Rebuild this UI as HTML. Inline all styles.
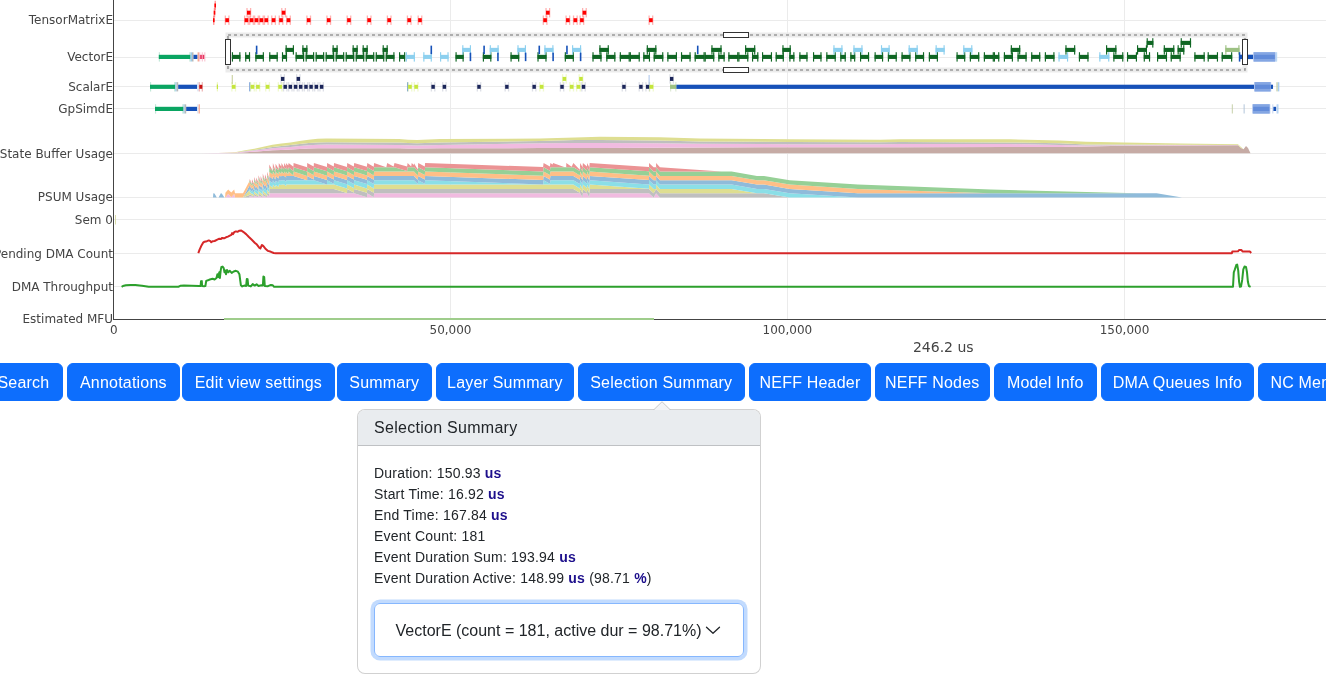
<!DOCTYPE html>
<html lang="en">
<head>
<meta charset="utf-8">
<title>Profile</title>
<style>
html,body{margin:0;padding:0;background:#fff;}
svg,.b,.pop{will-change:transform;}
body{width:1326px;height:681px;overflow:hidden;position:relative;font-family:"Liberation Sans",sans-serif;color:#212529;}
.b{position:absolute;top:363px;height:38px;box-sizing:border-box;background:#0d6efd;border:1px solid #0d6efd;border-radius:6px;color:#fff;font-family:"Liberation Sans",sans-serif;font-size:16px;line-height:24px;padding:7px 0 5px 0;letter-spacing:.2px;text-align:center;white-space:nowrap;margin:0;}
.pop{position:absolute;left:357px;top:409px;width:404px;height:265px;box-sizing:border-box;border:1px solid rgba(0,0,0,.18);border-radius:8px;background:#fff;}
.ph{height:36px;box-sizing:border-box;background:#e9ecef;border-bottom:1px solid rgba(0,0,0,.18);border-radius:7px 7px 0 0;padding:8px 16px;font-size:16px;line-height:19px;letter-spacing:.28px;}
.pb{padding:17px 16px 0 16px;font-size:14px;line-height:21px;letter-spacing:.2px;white-space:nowrap;}
.pb b{color:#1d0f8c;font-weight:700;}
.sel{position:absolute;left:15.5px;top:193px;width:370px;height:53.5px;box-sizing:border-box;border:1px solid #86b7fe;border-radius:6px;box-shadow:0 0 0 3.5px rgba(13,110,253,.25);font-size:16px;line-height:51px;padding-top:1.2px;text-align:center;white-space:nowrap;}
.arrow{position:absolute;left:653px;top:401px;}
</style>
</head>
<body>
<svg width="1326" height="360" viewBox="0 0 1326 360" style="position:absolute;left:0;top:0">
<g shape-rendering="crispEdges">
<line x1="114" x2="1326" y1="20.2" y2="20.2" stroke="#ebebeb" stroke-width="1"/>
<line x1="114" x2="1326" y1="57.2" y2="57.2" stroke="#ebebeb" stroke-width="1"/>
<line x1="114" x2="1326" y1="86.8" y2="86.8" stroke="#ebebeb" stroke-width="1"/>
<line x1="114" x2="1326" y1="108.9" y2="108.9" stroke="#ebebeb" stroke-width="1"/>
<line x1="114" x2="1326" y1="153.4" y2="153.4" stroke="#ebebeb" stroke-width="1"/>
<line x1="114" x2="1326" y1="197.8" y2="197.8" stroke="#ebebeb" stroke-width="1"/>
<line x1="114" x2="1326" y1="219.3" y2="219.3" stroke="#ebebeb" stroke-width="1"/>
<line x1="114" x2="1326" y1="253.4" y2="253.4" stroke="#ebebeb" stroke-width="1"/>
<line x1="114" x2="1326" y1="286.8" y2="286.8" stroke="#ebebeb" stroke-width="1"/>
<line x1="450.5" x2="450.5" y1="0" y2="319" stroke="#ebebeb" stroke-width="1"/>
<line x1="787.4" x2="787.4" y1="0" y2="319" stroke="#ebebeb" stroke-width="1"/>
<line x1="1124.5" x2="1124.5" y1="0" y2="319" stroke="#ebebeb" stroke-width="1"/>
</g>
<g>
<polygon points="200.0,153.3 218.1,153.2 236.2,152.9 245.2,152.2 254.3,151.7 263.3,151.0 272.4,150.3 281.4,149.9 290.5,149.5 299.5,149.0 308.6,148.5 317.6,148.2 326.7,148.2 362.9,148.2 399.1,148.3 408.1,148.5 417.2,148.6 440.0,148.3 540.0,148.1 575.0,147.9 600.0,147.9 660.0,147.7 700.0,147.5 790.0,147.3 880.0,147.2 900.0,147.2 1010.0,147.0 1060.0,147.0 1086.0,146.5 1124.0,145.8 1180.0,145.4 1238.0,145.2 1241.0,147.9 1243.5,149.2 1246.0,146.0 1248.0,148.0 1250.5,153.3 1250.5,153.3 1248.0,153.3 1246.0,153.3 1243.5,153.3 1241.0,153.3 1238.0,153.3 1180.0,153.3 1124.0,153.3 1086.0,153.3 1060.0,153.3 1010.0,153.3 900.0,153.3 880.0,153.3 790.0,153.3 700.0,153.3 660.0,153.3 600.0,153.3 575.0,153.3 540.0,153.3 440.0,153.3 417.2,153.3 408.1,153.3 399.1,153.3 362.9,153.3 326.7,153.3 317.6,153.3 308.6,153.3 299.5,153.3 290.5,153.3 281.4,153.3 272.4,153.3 263.3,153.3 254.3,153.3 245.2,153.3 236.2,153.3 218.1,153.3 200.0,153.3" fill="#c6aba5"/>
<polygon points="200.0,153.3 218.1,153.1 236.2,152.6 245.2,151.5 254.3,150.6 263.3,149.5 272.4,148.3 281.4,147.5 290.5,146.9 299.5,146.0 308.6,145.3 317.6,144.7 326.7,144.6 362.9,144.7 399.1,144.9 408.1,145.3 417.2,145.4 440.0,144.9 540.0,143.3 575.0,143.0 600.0,143.0 660.0,143.2 700.0,143.8 790.0,144.2 880.0,144.2 900.0,144.0 1010.0,144.0 1060.0,145.0 1086.0,145.4 1124.0,145.2 1180.0,145.0 1238.0,145.0 1241.0,147.9 1243.5,149.2 1246.0,146.0 1248.0,148.0 1250.5,153.3 1250.5,153.3 1248.0,148.0 1246.0,146.0 1243.5,149.2 1241.0,147.9 1238.0,145.2 1180.0,145.4 1124.0,145.8 1086.0,146.5 1060.0,147.0 1010.0,147.0 900.0,147.2 880.0,147.2 790.0,147.3 700.0,147.5 660.0,147.7 600.0,147.9 575.0,147.9 540.0,148.1 440.0,148.3 417.2,148.6 408.1,148.5 399.1,148.3 362.9,148.2 326.7,148.2 317.6,148.2 308.6,148.5 299.5,149.0 290.5,149.5 281.4,149.9 272.4,150.3 263.3,151.0 254.3,151.7 245.2,152.2 236.2,152.9 218.1,153.2 200.0,153.3" fill="#f1bbe0"/>
<polygon points="200.0,153.3 218.1,153.1 236.2,152.4 245.2,151.1 254.3,149.9 263.3,148.4 272.4,146.9 281.4,146.0 290.5,145.1 299.5,144.1 308.6,143.1 317.6,142.4 326.7,142.3 362.9,142.4 399.1,142.6 408.1,143.1 417.2,143.2 440.0,142.6 540.0,141.0 575.0,140.0 600.0,140.0 660.0,140.5 700.0,141.5 790.0,142.0 880.0,142.3 900.0,142.0 1010.0,142.4 1060.0,143.3 1086.0,144.4 1124.0,144.6 1180.0,144.7 1238.0,144.9 1241.0,147.9 1243.5,149.2 1246.0,146.0 1248.0,148.0 1250.5,153.3 1250.5,153.3 1248.0,148.0 1246.0,146.0 1243.5,149.2 1241.0,147.9 1238.0,145.0 1180.0,145.0 1124.0,145.2 1086.0,145.4 1060.0,145.0 1010.0,144.0 900.0,144.0 880.0,144.2 790.0,144.2 700.0,143.8 660.0,143.2 600.0,143.0 575.0,143.0 540.0,143.3 440.0,144.9 417.2,145.4 408.1,145.3 399.1,144.9 362.9,144.7 326.7,144.6 317.6,144.7 308.6,145.3 299.5,146.0 290.5,146.9 281.4,147.5 272.4,148.3 263.3,149.5 254.3,150.6 245.2,151.5 236.2,152.6 218.1,153.1 200.0,153.3" fill="#bfbfbf"/>
<polygon points="200.0,153.3 218.1,153.0 236.2,152.1 245.2,150.3 254.3,148.8 263.3,146.8 272.4,144.8 281.4,143.5 290.5,142.4 299.5,141.0 308.6,139.7 317.6,138.8 326.7,138.6 362.9,138.8 399.1,139.0 408.1,139.7 417.2,139.9 440.0,139.0 540.0,138.6 575.0,137.5 600.0,136.8 660.0,137.2 700.0,138.5 790.0,139.3 880.0,139.8 900.0,139.2 1010.0,139.3 1060.0,140.6 1086.0,141.8 1124.0,142.6 1180.0,143.4 1238.0,144.2 1241.0,147.0 1243.5,149.2 1246.0,146.0 1248.0,148.0 1250.5,153.3 1250.5,153.3 1248.0,148.0 1246.0,146.0 1243.5,149.2 1241.0,147.9 1238.0,144.9 1180.0,144.7 1124.0,144.6 1086.0,144.4 1060.0,143.3 1010.0,142.4 900.0,142.0 880.0,142.3 790.0,142.0 700.0,141.5 660.0,140.5 600.0,140.0 575.0,140.0 540.0,141.0 440.0,142.6 417.2,143.2 408.1,143.1 399.1,142.6 362.9,142.4 326.7,142.3 317.6,142.4 308.6,143.1 299.5,144.1 290.5,145.1 281.4,146.0 272.4,146.9 263.3,148.4 254.3,149.9 245.2,151.1 236.2,152.4 218.1,153.1 200.0,153.3" fill="#dede91"/>
<polygon points="213.0,197.6 213.3,197.6 214.5,197.6 216.8,197.6 218.6,197.6 220.8,197.6 221.8,197.6 224.2,197.6 224.3,197.6 225.1,197.6 225.4,197.6 228.2,193.7 231.3,197.2 234.2,193.9 235.0,197.6 243.0,197.6 249.3,197.6 249.8,195.7 251.8,196.7 252.0,196.6 254.0,197.3 254.1,195.5 256.1,196.6 256.3,196.5 258.3,197.2 258.5,195.4 260.5,196.5 260.7,196.4 262.6,197.2 262.8,195.2 264.8,196.4 265.0,196.4 267.0,197.2 267.2,195.0 269.2,196.3 269.3,193.3 272.7,193.3 272.9,193.3 275.4,193.3 275.6,193.3 278.6,193.3 278.8,193.3 281.3,193.3 281.5,193.3 284.0,193.3 284.2,193.3 286.3,193.3 285.9,193.3 288.2,193.3 288.6,193.3 293.4,193.3 293.6,193.3 307.1,193.3 307.2,193.3 313.7,193.3 313.9,193.3 327.0,193.3 327.1,193.3 333.8,193.3 334.0,193.3 347.0,193.3 347.2,193.3 353.8,193.3 354.2,193.3 366.9,197.2 367.3,193.3 373.7,197.2 374.1,193.3 386.3,193.3 387.2,193.3 393.6,193.3 394.5,193.3 407.1,193.3 407.6,193.3 411.2,193.3 411.7,193.3 413.9,193.3 414.0,193.3 417.8,193.3 418.2,193.3 424.8,193.3 425.1,193.3 543.1,193.3 543.6,193.3 549.9,193.3 550.4,193.3 552.6,193.3 553.1,193.3 564.8,193.3 564.8,193.3 566.2,193.3 566.3,193.3 571.6,193.3 573.4,193.3 579.8,193.3 580.2,193.3 582.5,197.6 582.9,193.3 587.0,193.3 587.1,193.3 589.3,197.6 589.7,193.3 649.0,193.3 649.0,193.3 653.6,197.6 653.6,197.6 656.1,193.3 656.1,193.3 659.9,197.6 659.9,197.6 721.4,197.6 721.4,197.6 731.6,197.6 731.6,197.6 757.0,197.6 757.0,197.6 764.0,197.6 764.0,197.6 789.7,197.6 789.7,197.6 858.0,197.6 858.0,197.6 991.0,197.6 991.0,197.6 1137.0,197.6 1137.0,197.6 1156.6,197.6 1156.6,197.6 1182.0,197.6 1182.0,197.6 1156.6,197.6 1156.6,197.6 1137.0,197.6 1137.0,197.6 991.0,197.6 991.0,197.6 858.0,197.6 858.0,197.6 789.7,197.6 789.7,197.6 764.0,197.6 764.0,197.6 757.0,197.6 757.0,197.6 731.6,197.6 731.6,197.6 721.4,197.6 721.4,197.6 659.9,197.6 659.9,197.6 656.1,197.6 656.1,197.6 653.6,197.6 653.6,197.6 649.0,197.6 649.0,197.6 589.7,197.6 589.3,197.6 587.1,197.6 587.0,197.6 582.9,197.6 582.5,197.6 580.2,197.6 579.8,197.6 573.4,197.6 571.6,197.6 566.3,197.6 566.2,197.6 564.8,197.6 564.8,197.6 553.1,197.6 552.6,197.6 550.4,197.6 549.9,197.6 543.6,197.6 543.1,197.6 425.1,197.6 424.8,197.6 418.2,197.6 417.8,197.6 414.0,197.6 413.9,197.6 411.7,197.6 411.2,197.6 407.6,197.6 407.1,197.6 394.5,197.6 393.6,197.6 387.2,197.6 386.3,197.6 374.1,197.6 373.7,197.6 367.3,197.6 366.9,197.6 354.2,197.6 353.8,197.6 347.2,197.6 347.0,197.6 334.0,197.6 333.8,197.6 327.1,197.6 327.0,197.6 313.9,197.6 313.7,197.6 307.2,197.6 307.1,197.6 293.6,197.6 293.4,197.6 288.6,197.6 288.2,197.6 285.9,197.6 286.3,197.6 284.2,197.6 284.0,197.6 281.5,197.6 281.3,197.6 278.8,197.6 278.6,197.6 275.6,197.6 275.4,197.6 272.9,197.6 272.7,197.6 269.3,197.6 269.2,197.6 267.2,197.6 267.0,197.6 265.0,197.6 264.8,197.6 262.8,197.6 262.6,197.6 260.7,197.6 260.5,197.6 258.5,197.6 258.3,197.6 256.3,197.6 256.1,197.6 254.1,197.6 254.0,197.6 252.0,197.6 251.8,197.6 249.8,197.6 249.3,197.6 243.0,197.6 235.0,197.6 234.2,197.6 231.3,197.6 228.2,197.6 225.4,197.6 225.1,197.6 224.3,197.6 224.2,197.6 221.8,197.6 220.8,197.6 218.6,197.6 216.8,197.6 214.5,197.6 213.3,197.6 213.0,197.6" fill="#f1bbe0"/>
<polygon points="213.0,197.6 213.3,197.6 214.5,197.6 216.8,197.6 218.6,197.6 220.8,197.6 221.8,197.6 224.2,197.6 224.3,197.6 225.1,197.6 225.4,197.6 228.2,193.7 231.3,197.2 234.2,193.9 235.0,197.6 243.0,197.6 249.3,195.0 249.8,193.9 251.8,195.4 252.0,195.3 254.0,196.6 254.1,193.5 256.1,195.2 256.3,195.1 258.3,196.5 258.5,193.1 260.5,195.0 260.7,194.9 262.6,196.4 262.8,192.8 264.8,194.8 265.0,194.7 267.0,196.4 267.2,192.4 269.2,194.6 269.3,188.9 272.7,188.9 272.9,188.9 275.4,188.9 275.6,188.9 278.6,188.9 278.8,188.9 281.3,188.9 281.5,188.9 284.0,188.9 284.2,188.9 286.3,188.9 285.9,188.9 288.2,188.9 288.6,188.9 293.4,188.9 293.6,188.9 307.1,188.9 307.2,188.9 313.7,188.9 313.9,188.9 327.0,188.9 327.1,188.9 333.8,188.9 334.0,188.9 347.0,192.9 347.2,188.9 353.8,192.6 354.2,188.9 366.9,192.8 367.3,188.9 373.7,192.8 374.1,188.9 386.3,188.9 387.2,188.9 393.6,188.9 394.5,188.9 407.1,188.9 407.6,188.9 411.2,188.9 411.7,188.9 413.9,188.9 414.0,188.9 417.8,188.9 418.2,188.9 424.8,188.9 425.1,188.9 543.1,188.9 543.6,188.9 549.9,188.9 550.4,188.9 552.6,188.9 553.1,188.9 564.8,188.9 564.8,188.9 566.2,188.9 566.3,188.9 571.6,188.9 573.4,188.9 579.8,192.8 580.2,188.9 582.5,193.3 582.9,188.9 587.0,192.4 587.1,188.9 589.3,193.3 589.7,188.9 649.0,188.9 649.0,188.9 653.6,193.3 653.6,193.3 656.1,188.9 656.1,188.9 659.9,193.3 659.9,193.3 721.4,193.3 721.4,193.3 731.6,193.3 731.6,193.3 757.0,193.3 757.0,193.3 764.0,193.3 764.0,193.3 789.7,197.6 789.7,197.6 858.0,197.6 858.0,197.6 991.0,197.6 991.0,197.6 1137.0,197.6 1137.0,197.6 1156.6,197.6 1156.6,197.6 1182.0,197.6 1182.0,197.6 1156.6,197.6 1156.6,197.6 1137.0,197.6 1137.0,197.6 991.0,197.6 991.0,197.6 858.0,197.6 858.0,197.6 789.7,197.6 789.7,197.6 764.0,197.6 764.0,197.6 757.0,197.6 757.0,197.6 731.6,197.6 731.6,197.6 721.4,197.6 721.4,197.6 659.9,197.6 659.9,197.6 656.1,193.3 656.1,193.3 653.6,197.6 653.6,197.6 649.0,193.3 649.0,193.3 589.7,193.3 589.3,197.6 587.1,193.3 587.0,193.3 582.9,193.3 582.5,197.6 580.2,193.3 579.8,193.3 573.4,193.3 571.6,193.3 566.3,193.3 566.2,193.3 564.8,193.3 564.8,193.3 553.1,193.3 552.6,193.3 550.4,193.3 549.9,193.3 543.6,193.3 543.1,193.3 425.1,193.3 424.8,193.3 418.2,193.3 417.8,193.3 414.0,193.3 413.9,193.3 411.7,193.3 411.2,193.3 407.6,193.3 407.1,193.3 394.5,193.3 393.6,193.3 387.2,193.3 386.3,193.3 374.1,193.3 373.7,197.2 367.3,193.3 366.9,197.2 354.2,193.3 353.8,193.3 347.2,193.3 347.0,193.3 334.0,193.3 333.8,193.3 327.1,193.3 327.0,193.3 313.9,193.3 313.7,193.3 307.2,193.3 307.1,193.3 293.6,193.3 293.4,193.3 288.6,193.3 288.2,193.3 285.9,193.3 286.3,193.3 284.2,193.3 284.0,193.3 281.5,193.3 281.3,193.3 278.8,193.3 278.6,193.3 275.6,193.3 275.4,193.3 272.9,193.3 272.7,193.3 269.3,193.3 269.2,196.3 267.2,195.0 267.0,197.2 265.0,196.4 264.8,196.4 262.8,195.2 262.6,197.2 260.7,196.4 260.5,196.5 258.5,195.4 258.3,197.2 256.3,196.5 256.1,196.6 254.1,195.5 254.0,197.3 252.0,196.6 251.8,196.7 249.8,195.7 249.3,197.6 243.0,197.6 235.0,197.6 234.2,193.9 231.3,197.2 228.2,193.7 225.4,197.6 225.1,197.6 224.3,197.6 224.2,197.6 221.8,197.6 220.8,197.6 218.6,197.6 216.8,197.6 214.5,197.6 213.3,197.6 213.0,197.6" fill="#bfbfbf"/>
<polygon points="213.0,197.6 213.3,197.6 214.5,197.6 216.8,197.6 218.6,197.6 220.8,197.6 221.8,197.6 224.2,197.6 224.3,197.6 225.1,197.6 225.4,197.6 228.2,193.7 231.3,197.2 234.2,193.9 235.0,197.6 243.0,197.6 249.3,190.2 249.8,191.7 251.8,193.9 252.0,193.3 254.0,195.3 254.1,191.1 256.1,193.5 256.3,193.0 258.3,195.1 258.5,190.5 260.5,193.1 260.7,192.6 262.6,194.9 262.8,190.0 264.8,192.8 265.0,192.2 267.0,194.7 267.2,189.4 269.2,192.4 269.3,185.0 272.7,187.6 272.9,184.6 275.4,187.2 275.6,185.0 278.6,186.8 278.8,184.6 281.3,185.0 281.5,184.6 284.0,184.6 284.2,184.6 286.3,186.3 285.9,184.6 288.2,184.6 288.6,184.6 293.4,184.6 293.6,184.6 307.1,184.6 307.2,184.6 313.7,184.6 313.9,184.6 327.0,184.6 327.1,184.6 333.8,184.6 334.0,184.6 347.0,188.6 347.2,184.6 353.8,188.3 354.2,184.6 366.9,188.5 367.3,184.6 373.7,188.5 374.1,184.6 386.3,184.6 387.2,184.6 393.6,184.6 394.5,184.6 407.1,184.6 407.6,184.6 411.2,184.6 411.7,184.6 413.9,184.6 414.0,184.6 417.8,184.6 418.2,184.6 424.8,184.6 425.1,184.6 543.1,184.6 543.6,184.6 549.9,184.6 550.4,184.6 552.6,184.6 553.1,184.6 564.8,184.6 564.8,184.6 566.2,184.6 566.3,184.6 571.6,184.6 573.4,184.6 579.8,188.5 580.2,184.6 582.5,188.9 582.9,184.6 587.0,188.1 587.1,184.6 589.3,188.9 589.7,184.6 649.0,188.7 649.0,184.6 653.6,188.9 653.6,188.9 656.1,188.9 656.1,184.6 659.9,188.9 659.9,188.9 721.4,188.9 721.4,188.9 731.6,188.9 731.6,188.9 757.0,193.3 757.0,193.3 764.0,193.3 764.0,193.3 789.7,197.6 789.7,197.6 858.0,197.6 858.0,197.6 991.0,197.6 991.0,197.6 1137.0,197.6 1137.0,197.6 1156.6,197.6 1156.6,197.6 1182.0,197.6 1182.0,197.6 1156.6,197.6 1156.6,197.6 1137.0,197.6 1137.0,197.6 991.0,197.6 991.0,197.6 858.0,197.6 858.0,197.6 789.7,197.6 789.7,197.6 764.0,193.3 764.0,193.3 757.0,193.3 757.0,193.3 731.6,193.3 731.6,193.3 721.4,193.3 721.4,193.3 659.9,193.3 659.9,193.3 656.1,188.9 656.1,188.9 653.6,193.3 653.6,193.3 649.0,188.9 649.0,188.9 589.7,188.9 589.3,193.3 587.1,188.9 587.0,192.4 582.9,188.9 582.5,193.3 580.2,188.9 579.8,192.8 573.4,188.9 571.6,188.9 566.3,188.9 566.2,188.9 564.8,188.9 564.8,188.9 553.1,188.9 552.6,188.9 550.4,188.9 549.9,188.9 543.6,188.9 543.1,188.9 425.1,188.9 424.8,188.9 418.2,188.9 417.8,188.9 414.0,188.9 413.9,188.9 411.7,188.9 411.2,188.9 407.6,188.9 407.1,188.9 394.5,188.9 393.6,188.9 387.2,188.9 386.3,188.9 374.1,188.9 373.7,192.8 367.3,188.9 366.9,192.8 354.2,188.9 353.8,192.6 347.2,188.9 347.0,192.9 334.0,188.9 333.8,188.9 327.1,188.9 327.0,188.9 313.9,188.9 313.7,188.9 307.2,188.9 307.1,188.9 293.6,188.9 293.4,188.9 288.6,188.9 288.2,188.9 285.9,188.9 286.3,188.9 284.2,188.9 284.0,188.9 281.5,188.9 281.3,188.9 278.8,188.9 278.6,188.9 275.6,188.9 275.4,188.9 272.9,188.9 272.7,188.9 269.3,188.9 269.2,194.6 267.2,192.4 267.0,196.4 265.0,194.7 264.8,194.8 262.8,192.8 262.6,196.4 260.7,194.9 260.5,195.0 258.5,193.1 258.3,196.5 256.3,195.1 256.1,195.2 254.1,193.5 254.0,196.6 252.0,195.3 251.8,195.4 249.8,193.9 249.3,195.0 243.0,197.6 235.0,197.6 234.2,193.9 231.3,197.2 228.2,193.7 225.4,197.6 225.1,197.6 224.3,197.6 224.2,197.6 221.8,197.6 220.8,197.6 218.6,197.6 216.8,197.6 214.5,197.6 213.3,197.6 213.0,197.6" fill="#dede91"/>
<polygon points="213.0,197.6 213.3,197.6 214.5,197.6 216.8,197.6 218.6,197.6 220.8,197.6 221.8,197.6 224.2,197.6 224.3,197.6 225.1,197.6 225.4,197.6 228.2,193.7 231.3,197.2 234.2,193.9 235.0,197.6 243.0,197.6 249.3,190.2 249.8,189.2 251.8,191.7 252.0,190.1 254.0,192.7 254.1,188.4 256.1,191.1 256.3,189.4 258.3,192.2 258.5,187.6 260.5,190.5 260.7,188.7 262.6,191.8 262.8,186.8 264.8,190.0 265.0,188.0 267.0,191.4 267.2,185.9 269.2,189.4 269.3,180.7 272.7,183.3 272.9,180.2 275.4,183.7 275.6,180.7 278.6,182.4 278.8,180.2 281.3,180.7 281.5,180.2 284.0,180.2 284.2,180.2 286.3,182.0 285.9,180.2 288.2,180.2 288.6,180.2 293.4,180.2 293.6,180.2 307.1,180.2 307.2,180.2 313.7,180.2 313.9,180.2 327.0,184.4 327.1,180.2 333.8,183.8 334.0,180.2 347.0,184.2 347.2,180.2 353.8,183.9 354.2,180.2 366.9,184.1 367.3,180.2 373.7,184.1 374.1,180.2 386.3,180.2 387.2,180.2 393.6,180.2 394.5,180.2 407.1,180.2 407.6,180.2 411.2,180.2 411.7,180.2 413.9,180.2 414.0,180.2 417.8,184.1 418.2,180.2 424.8,183.7 425.1,180.2 543.1,184.4 543.6,180.2 549.9,183.7 550.4,180.2 552.6,180.2 553.1,180.2 564.8,180.2 564.8,180.2 566.2,180.2 566.3,180.2 571.6,180.2 573.4,180.2 579.8,184.1 580.2,180.2 582.5,184.6 582.9,180.2 587.0,183.7 587.1,180.2 589.3,184.6 589.7,180.2 649.0,184.4 649.0,180.2 653.6,184.6 653.6,184.6 656.1,184.6 656.1,180.2 659.9,184.6 659.9,184.6 721.4,184.6 721.4,184.6 731.6,184.6 731.6,184.6 757.0,188.9 757.0,188.9 764.0,188.9 764.0,188.9 789.7,193.3 789.7,193.3 858.0,197.6 858.0,197.6 991.0,197.6 991.0,197.6 1137.0,197.6 1137.0,197.6 1156.6,197.6 1156.6,197.6 1182.0,197.6 1182.0,197.6 1156.6,197.6 1156.6,197.6 1137.0,197.6 1137.0,197.6 991.0,197.6 991.0,197.6 858.0,197.6 858.0,197.6 789.7,197.6 789.7,197.6 764.0,193.3 764.0,193.3 757.0,193.3 757.0,193.3 731.6,188.9 731.6,188.9 721.4,188.9 721.4,188.9 659.9,188.9 659.9,188.9 656.1,184.6 656.1,188.9 653.6,188.9 653.6,188.9 649.0,184.6 649.0,188.7 589.7,184.6 589.3,188.9 587.1,184.6 587.0,188.1 582.9,184.6 582.5,188.9 580.2,184.6 579.8,188.5 573.4,184.6 571.6,184.6 566.3,184.6 566.2,184.6 564.8,184.6 564.8,184.6 553.1,184.6 552.6,184.6 550.4,184.6 549.9,184.6 543.6,184.6 543.1,184.6 425.1,184.6 424.8,184.6 418.2,184.6 417.8,184.6 414.0,184.6 413.9,184.6 411.7,184.6 411.2,184.6 407.6,184.6 407.1,184.6 394.5,184.6 393.6,184.6 387.2,184.6 386.3,184.6 374.1,184.6 373.7,188.5 367.3,184.6 366.9,188.5 354.2,184.6 353.8,188.3 347.2,184.6 347.0,188.6 334.0,184.6 333.8,184.6 327.1,184.6 327.0,184.6 313.9,184.6 313.7,184.6 307.2,184.6 307.1,184.6 293.6,184.6 293.4,184.6 288.6,184.6 288.2,184.6 285.9,184.6 286.3,186.3 284.2,184.6 284.0,184.6 281.5,184.6 281.3,185.0 278.8,184.6 278.6,186.8 275.6,185.0 275.4,187.2 272.9,184.6 272.7,187.6 269.3,185.0 269.2,192.4 267.2,189.4 267.0,194.7 265.0,192.2 264.8,192.8 262.8,190.0 262.6,194.9 260.7,192.6 260.5,193.1 258.5,190.5 258.3,195.1 256.3,193.0 256.1,193.5 254.1,191.1 254.0,195.3 252.0,193.3 251.8,193.9 249.8,191.7 249.3,190.2 243.0,197.6 235.0,197.6 234.2,193.9 231.3,197.2 228.2,193.7 225.4,197.6 225.1,197.6 224.3,197.6 224.2,197.6 221.8,197.6 220.8,197.6 218.6,197.6 216.8,197.6 214.5,197.6 213.3,197.6 213.0,197.6" fill="#8bdfe7"/>
<polygon points="213.0,197.6 213.3,193.3 214.5,193.5 216.8,197.6 218.6,197.6 220.8,193.3 221.8,193.5 224.2,197.2 224.3,197.6 225.1,197.6 225.4,197.6 228.2,193.7 231.3,197.2 234.2,193.9 235.0,197.6 243.0,197.6 249.3,185.9 249.8,186.0 251.8,188.9 252.0,187.1 254.0,190.1 254.1,184.9 256.1,188.0 256.3,186.2 258.3,189.4 258.5,183.8 260.5,187.2 260.7,185.2 262.6,188.7 262.8,182.7 264.8,186.4 265.0,184.3 267.0,188.0 267.2,181.6 269.2,185.5 269.3,176.3 272.7,178.9 272.9,175.9 275.4,179.4 275.6,176.3 278.6,178.5 278.8,175.9 281.3,176.3 281.5,175.9 284.0,175.9 284.2,175.9 286.3,177.6 285.9,175.9 288.2,175.9 288.6,175.9 293.4,175.9 293.6,175.9 307.1,180.2 307.2,175.9 313.7,179.6 313.9,175.9 327.0,180.0 327.1,175.9 333.8,179.5 334.0,175.9 347.0,179.9 347.2,175.9 353.8,179.6 354.2,175.9 366.9,179.8 367.3,175.9 373.7,179.8 374.1,175.9 386.3,175.9 387.2,175.9 393.6,175.9 394.5,175.9 407.1,175.9 407.6,175.9 411.2,175.9 411.7,175.9 413.9,175.9 414.0,175.9 417.8,179.8 418.2,175.9 424.8,179.4 425.1,175.9 543.1,180.1 543.6,175.9 549.9,179.4 550.4,175.9 552.6,175.9 553.1,175.9 564.8,175.9 564.8,175.9 566.2,175.9 566.3,175.9 571.6,175.9 573.4,175.9 579.8,179.8 580.2,175.9 582.5,180.2 582.9,175.9 587.0,179.4 587.1,175.9 589.3,180.2 589.7,175.9 649.0,180.0 649.0,175.9 653.6,180.2 653.6,180.2 656.1,180.2 656.1,175.9 659.9,180.2 659.9,180.2 721.4,180.2 721.4,180.2 731.6,180.2 731.6,180.2 757.0,184.6 757.0,184.6 764.0,184.6 764.0,184.6 789.7,188.9 789.7,188.9 858.0,193.3 858.0,193.3 991.0,193.3 991.0,193.3 1137.0,193.3 1137.0,193.3 1156.6,193.3 1156.6,193.3 1182.0,197.6 1182.0,197.6 1156.6,197.6 1156.6,197.6 1137.0,197.6 1137.0,197.6 991.0,197.6 991.0,197.6 858.0,197.6 858.0,197.6 789.7,193.3 789.7,193.3 764.0,188.9 764.0,188.9 757.0,188.9 757.0,188.9 731.6,184.6 731.6,184.6 721.4,184.6 721.4,184.6 659.9,184.6 659.9,184.6 656.1,180.2 656.1,184.6 653.6,184.6 653.6,184.6 649.0,180.2 649.0,184.4 589.7,180.2 589.3,184.6 587.1,180.2 587.0,183.7 582.9,180.2 582.5,184.6 580.2,180.2 579.8,184.1 573.4,180.2 571.6,180.2 566.3,180.2 566.2,180.2 564.8,180.2 564.8,180.2 553.1,180.2 552.6,180.2 550.4,180.2 549.9,183.7 543.6,180.2 543.1,184.4 425.1,180.2 424.8,183.7 418.2,180.2 417.8,184.1 414.0,180.2 413.9,180.2 411.7,180.2 411.2,180.2 407.6,180.2 407.1,180.2 394.5,180.2 393.6,180.2 387.2,180.2 386.3,180.2 374.1,180.2 373.7,184.1 367.3,180.2 366.9,184.1 354.2,180.2 353.8,183.9 347.2,180.2 347.0,184.2 334.0,180.2 333.8,183.8 327.1,180.2 327.0,184.4 313.9,180.2 313.7,180.2 307.2,180.2 307.1,180.2 293.6,180.2 293.4,180.2 288.6,180.2 288.2,180.2 285.9,180.2 286.3,182.0 284.2,180.2 284.0,180.2 281.5,180.2 281.3,180.7 278.8,180.2 278.6,182.4 275.6,180.7 275.4,183.7 272.9,180.2 272.7,183.3 269.3,180.7 269.2,189.4 267.2,185.9 267.0,191.4 265.0,188.0 264.8,190.0 262.8,186.8 262.6,191.8 260.7,188.7 260.5,190.5 258.5,187.6 258.3,192.2 256.3,189.4 256.1,191.1 254.1,188.4 254.0,192.7 252.0,190.1 251.8,191.7 249.8,189.2 249.3,190.2 243.0,197.6 235.0,197.6 234.2,193.9 231.3,197.2 228.2,193.7 225.4,197.6 225.1,197.6 224.3,197.6 224.2,197.6 221.8,197.6 220.8,197.6 218.6,197.6 216.8,197.6 214.5,197.6 213.3,197.6 213.0,197.6" fill="#8fbbda"/>
<polygon points="213.0,197.6 213.3,193.3 214.5,193.5 216.8,197.6 218.6,197.6 220.8,193.3 221.8,193.5 224.2,197.2 224.3,197.6 225.1,197.6 225.4,192.8 228.2,189.4 231.3,192.6 234.2,189.6 235.0,193.3 243.0,193.3 249.3,181.5 249.8,182.9 251.8,185.7 252.0,183.9 254.0,186.8 254.1,181.5 256.1,184.6 256.3,182.6 258.3,185.8 258.5,180.1 260.5,183.5 260.7,181.4 262.6,184.8 262.8,178.7 264.8,182.3 265.0,180.1 267.0,183.9 267.2,177.3 269.2,181.2 269.3,172.0 272.7,174.6 272.9,171.6 275.4,175.0 275.6,172.0 278.6,174.2 278.8,171.6 281.3,173.7 281.5,171.6 284.0,173.7 284.2,171.6 286.3,173.7 285.9,171.6 288.2,174.2 288.6,171.6 293.4,175.5 293.6,171.6 307.1,175.9 307.2,171.6 313.7,175.2 313.9,171.6 327.0,175.7 327.1,171.6 333.8,175.2 334.0,171.6 347.0,175.6 347.2,171.6 353.8,175.2 354.2,171.6 366.9,175.5 367.3,171.6 373.7,175.5 374.1,171.6 386.3,171.6 387.2,171.6 393.6,171.6 394.5,171.6 407.1,171.6 407.6,171.6 411.2,171.6 411.7,171.6 413.9,171.6 414.0,171.6 417.8,175.5 418.2,171.6 424.8,175.0 425.1,171.6 543.1,175.8 543.6,171.6 549.9,175.0 550.4,171.6 552.6,171.6 553.1,171.6 564.8,171.6 564.8,171.6 566.2,171.6 566.3,171.6 571.6,171.6 573.4,171.6 579.8,175.5 580.2,171.6 582.5,175.9 582.9,171.6 587.0,175.0 587.1,171.6 589.3,175.9 589.7,171.6 649.0,175.7 649.0,171.6 653.6,175.9 653.6,175.9 656.1,175.9 656.1,171.6 659.9,175.9 659.9,175.9 721.4,175.9 721.4,175.9 731.6,175.9 731.6,175.9 757.0,180.2 757.0,180.2 764.0,180.2 764.0,180.2 789.7,184.6 789.7,184.6 858.0,188.9 858.0,188.9 991.0,193.3 991.0,193.3 1137.0,193.3 1137.0,193.3 1156.6,193.3 1156.6,193.3 1182.0,197.6 1182.0,197.6 1156.6,193.3 1156.6,193.3 1137.0,193.3 1137.0,193.3 991.0,193.3 991.0,193.3 858.0,193.3 858.0,193.3 789.7,188.9 789.7,188.9 764.0,184.6 764.0,184.6 757.0,184.6 757.0,184.6 731.6,180.2 731.6,180.2 721.4,180.2 721.4,180.2 659.9,180.2 659.9,180.2 656.1,175.9 656.1,180.2 653.6,180.2 653.6,180.2 649.0,175.9 649.0,180.0 589.7,175.9 589.3,180.2 587.1,175.9 587.0,179.4 582.9,175.9 582.5,180.2 580.2,175.9 579.8,179.8 573.4,175.9 571.6,175.9 566.3,175.9 566.2,175.9 564.8,175.9 564.8,175.9 553.1,175.9 552.6,175.9 550.4,175.9 549.9,179.4 543.6,175.9 543.1,180.1 425.1,175.9 424.8,179.4 418.2,175.9 417.8,179.8 414.0,175.9 413.9,175.9 411.7,175.9 411.2,175.9 407.6,175.9 407.1,175.9 394.5,175.9 393.6,175.9 387.2,175.9 386.3,175.9 374.1,175.9 373.7,179.8 367.3,175.9 366.9,179.8 354.2,175.9 353.8,179.6 347.2,175.9 347.0,179.9 334.0,175.9 333.8,179.5 327.1,175.9 327.0,180.0 313.9,175.9 313.7,179.6 307.2,175.9 307.1,180.2 293.6,175.9 293.4,175.9 288.6,175.9 288.2,175.9 285.9,175.9 286.3,177.6 284.2,175.9 284.0,175.9 281.5,175.9 281.3,176.3 278.8,175.9 278.6,178.5 275.6,176.3 275.4,179.4 272.9,175.9 272.7,178.9 269.3,176.3 269.2,185.5 267.2,181.6 267.0,188.0 265.0,184.3 264.8,186.4 262.8,182.7 262.6,188.7 260.7,185.2 260.5,187.2 258.5,183.8 258.3,189.4 256.3,186.2 256.1,188.0 254.1,184.9 254.0,190.1 252.0,187.1 251.8,188.9 249.8,186.0 249.3,185.9 243.0,197.6 235.0,197.6 234.2,193.9 231.3,197.2 228.2,193.7 225.4,197.6 225.1,197.6 224.3,197.6 224.2,197.2 221.8,193.5 220.8,193.3 218.6,197.6 216.8,197.6 214.5,193.5 213.3,193.3 213.0,197.6" fill="#ffbf87"/>
<polygon points="213.0,197.6 213.3,193.3 214.5,193.5 216.8,197.6 218.6,197.6 220.8,193.3 221.8,193.5 224.2,197.2 224.3,197.6 225.1,197.6 225.4,192.8 228.2,189.4 231.3,192.6 234.2,189.6 235.0,193.3 243.0,193.3 249.3,181.5 249.8,180.7 251.8,184.5 252.0,181.9 254.0,185.2 254.1,179.1 256.1,183.2 256.3,180.5 258.3,184.0 258.5,177.5 260.5,182.0 260.7,179.0 262.6,182.9 262.8,175.9 264.8,180.7 265.0,177.6 267.0,181.8 267.2,174.3 269.2,179.5 269.3,168.1 272.7,171.1 272.9,167.2 275.4,172.4 275.6,167.7 278.6,170.3 278.8,167.2 281.3,169.4 281.5,167.2 284.0,169.4 284.2,167.2 286.3,169.4 285.9,167.2 288.2,169.8 288.6,167.2 293.4,171.1 293.6,167.2 307.1,171.6 307.2,167.2 313.7,170.9 313.9,167.2 327.0,171.3 327.1,167.2 333.8,170.8 334.0,167.2 347.0,171.2 347.2,167.2 353.8,170.9 354.2,167.2 366.9,171.1 367.3,167.2 373.7,171.1 374.1,167.2 386.3,167.2 387.2,167.2 393.6,167.2 394.5,167.2 407.1,170.9 407.6,167.2 411.2,167.2 411.7,167.2 413.9,167.2 414.0,167.2 417.8,171.1 418.2,167.2 424.8,170.7 425.1,167.2 543.1,171.4 543.6,167.2 549.9,170.7 550.4,167.2 552.6,167.2 553.1,167.2 564.8,167.2 564.8,167.2 566.2,167.2 566.3,167.2 571.6,167.2 573.4,167.2 579.8,171.1 580.2,167.2 582.5,171.6 582.9,167.2 587.0,170.7 587.1,167.2 589.3,171.6 589.7,167.2 649.0,171.3 649.0,167.2 653.6,171.6 653.6,171.6 656.1,171.6 656.1,167.2 659.9,171.6 659.9,171.6 721.4,171.6 721.4,171.6 731.6,171.6 731.6,171.6 757.0,175.9 757.0,175.9 764.0,175.9 764.0,175.9 789.7,180.2 789.7,180.2 858.0,184.6 858.0,184.6 991.0,189.6 991.0,189.6 1137.0,193.3 1137.0,193.3 1156.6,193.3 1156.6,193.3 1182.0,197.6 1182.0,197.6 1156.6,193.3 1156.6,193.3 1137.0,193.3 1137.0,193.3 991.0,193.3 991.0,193.3 858.0,188.9 858.0,188.9 789.7,184.6 789.7,184.6 764.0,180.2 764.0,180.2 757.0,180.2 757.0,180.2 731.6,175.9 731.6,175.9 721.4,175.9 721.4,175.9 659.9,175.9 659.9,175.9 656.1,171.6 656.1,175.9 653.6,175.9 653.6,175.9 649.0,171.6 649.0,175.7 589.7,171.6 589.3,175.9 587.1,171.6 587.0,175.0 582.9,171.6 582.5,175.9 580.2,171.6 579.8,175.5 573.4,171.6 571.6,171.6 566.3,171.6 566.2,171.6 564.8,171.6 564.8,171.6 553.1,171.6 552.6,171.6 550.4,171.6 549.9,175.0 543.6,171.6 543.1,175.8 425.1,171.6 424.8,175.0 418.2,171.6 417.8,175.5 414.0,171.6 413.9,171.6 411.7,171.6 411.2,171.6 407.6,171.6 407.1,171.6 394.5,171.6 393.6,171.6 387.2,171.6 386.3,171.6 374.1,171.6 373.7,175.5 367.3,171.6 366.9,175.5 354.2,171.6 353.8,175.2 347.2,171.6 347.0,175.6 334.0,171.6 333.8,175.2 327.1,171.6 327.0,175.7 313.9,171.6 313.7,175.2 307.2,171.6 307.1,175.9 293.6,171.6 293.4,175.5 288.6,171.6 288.2,174.2 285.9,171.6 286.3,173.7 284.2,171.6 284.0,173.7 281.5,171.6 281.3,173.7 278.8,171.6 278.6,174.2 275.6,172.0 275.4,175.0 272.9,171.6 272.7,174.6 269.3,172.0 269.2,181.2 267.2,177.3 267.0,183.9 265.0,180.1 264.8,182.3 262.8,178.7 262.6,184.8 260.7,181.4 260.5,183.5 258.5,180.1 258.3,185.8 256.3,182.6 256.1,184.6 254.1,181.5 254.0,186.8 252.0,183.9 251.8,185.7 249.8,182.9 249.3,181.5 243.0,193.3 235.0,193.3 234.2,189.6 231.3,192.6 228.2,189.4 225.4,192.8 225.1,197.6 224.3,197.6 224.2,197.2 221.8,193.5 220.8,193.3 218.6,197.6 216.8,197.6 214.5,193.5 213.3,193.3 213.0,197.6" fill="#96d096"/>
<polygon points="213.0,197.6 213.3,193.3 214.5,193.5 216.8,197.6 218.6,197.6 220.8,193.3 221.8,193.5 224.2,197.2 224.3,197.6 225.1,197.6 225.4,192.8 228.2,189.4 231.3,192.6 234.2,189.6 235.0,193.3 243.0,193.3 249.3,181.5 249.8,178.9 251.8,183.9 252.0,179.3 254.0,183.9 254.1,177.1 256.1,182.5 256.3,177.6 258.3,182.6 258.5,175.3 260.5,181.2 260.7,175.9 262.6,181.4 262.8,173.5 264.8,179.9 265.0,174.3 267.0,180.1 267.2,171.7 269.2,178.6 269.3,164.6 272.7,170.7 272.9,162.9 275.4,170.3 275.6,163.7 278.6,169.0 278.8,162.9 281.3,166.8 281.5,162.9 284.0,167.2 284.2,162.9 286.3,166.4 285.9,162.9 288.2,165.5 288.6,162.9 293.4,166.8 293.6,162.9 307.1,167.2 307.2,162.9 313.7,166.6 313.9,162.9 327.0,167.0 327.1,162.9 333.8,166.5 334.0,162.9 347.0,166.9 347.2,162.9 353.8,166.6 354.2,162.9 366.9,166.8 367.3,162.9 373.7,166.8 374.1,162.9 386.3,167.2 387.2,162.9 393.6,166.6 394.5,162.9 407.1,166.6 407.6,162.9 411.2,166.4 411.7,162.9 413.9,165.1 414.0,163.3 417.8,169.4 418.2,162.9 424.8,166.4 425.1,162.9 543.1,167.1 543.6,162.9 549.9,166.4 550.4,162.9 552.6,164.6 553.1,162.9 564.8,167.2 564.8,167.2 566.2,167.2 566.3,162.9 571.6,166.8 573.4,162.9 579.8,169.8 580.2,162.9 582.5,167.2 582.9,162.9 587.0,166.4 587.1,162.9 589.3,167.2 589.7,162.9 649.0,167.0 649.0,162.9 653.6,167.2 653.6,167.2 656.1,167.2 656.1,162.9 659.9,167.2 659.9,167.2 721.4,171.6 721.4,171.6 731.6,171.6 731.6,171.6 757.0,175.9 757.0,175.9 764.0,175.9 764.0,175.9 789.7,180.2 789.7,180.2 858.0,184.6 858.0,184.6 991.0,189.6 991.0,189.6 1137.0,193.3 1137.0,193.3 1156.6,193.3 1156.6,193.3 1182.0,197.6 1182.0,197.6 1156.6,193.3 1156.6,193.3 1137.0,193.3 1137.0,193.3 991.0,189.6 991.0,189.6 858.0,184.6 858.0,184.6 789.7,180.2 789.7,180.2 764.0,175.9 764.0,175.9 757.0,175.9 757.0,175.9 731.6,171.6 731.6,171.6 721.4,171.6 721.4,171.6 659.9,171.6 659.9,171.6 656.1,167.2 656.1,171.6 653.6,171.6 653.6,171.6 649.0,167.2 649.0,171.3 589.7,167.2 589.3,171.6 587.1,167.2 587.0,170.7 582.9,167.2 582.5,171.6 580.2,167.2 579.8,171.1 573.4,167.2 571.6,167.2 566.3,167.2 566.2,167.2 564.8,167.2 564.8,167.2 553.1,167.2 552.6,167.2 550.4,167.2 549.9,170.7 543.6,167.2 543.1,171.4 425.1,167.2 424.8,170.7 418.2,167.2 417.8,171.1 414.0,167.2 413.9,167.2 411.7,167.2 411.2,167.2 407.6,167.2 407.1,170.9 394.5,167.2 393.6,167.2 387.2,167.2 386.3,167.2 374.1,167.2 373.7,171.1 367.3,167.2 366.9,171.1 354.2,167.2 353.8,170.9 347.2,167.2 347.0,171.2 334.0,167.2 333.8,170.8 327.1,167.2 327.0,171.3 313.9,167.2 313.7,170.9 307.2,167.2 307.1,171.6 293.6,167.2 293.4,171.1 288.6,167.2 288.2,169.8 285.9,167.2 286.3,169.4 284.2,167.2 284.0,169.4 281.5,167.2 281.3,169.4 278.8,167.2 278.6,170.3 275.6,167.7 275.4,172.4 272.9,167.2 272.7,171.1 269.3,168.1 269.2,179.5 267.2,174.3 267.0,181.8 265.0,177.6 264.8,180.7 262.8,175.9 262.6,182.9 260.7,179.0 260.5,182.0 258.5,177.5 258.3,184.0 256.3,180.5 256.1,183.2 254.1,179.1 254.0,185.2 252.0,181.9 251.8,184.5 249.8,180.7 249.3,181.5 243.0,193.3 235.0,193.3 234.2,189.6 231.3,192.6 228.2,189.4 225.4,192.8 225.1,197.6 224.3,197.6 224.2,197.2 221.8,193.5 220.8,193.3 218.6,197.6 216.8,197.6 214.5,193.5 213.3,193.3 213.0,197.6" fill="#eb9394"/>
</g>
<g>
<rect x="228" y="35" width="1017" height="35" fill="none" stroke="#e9e9e9" stroke-opacity="0.9" stroke-width="5"/>
<rect x="228" y="35" width="1017" height="35" fill="none" stroke="#9a9a9a" stroke-width="1.6" stroke-dasharray="3 3"/>
</g>
<g>
<rect x="225.33" y="18.20" width="3.60" height="4.00" fill="#ff0000"/>
<rect x="224.68" y="15.50" width="1.30" height="9.40" fill="#ff0000" opacity="0.3"/>
<rect x="228.28" y="15.50" width="1.30" height="9.40" fill="#ff0000" opacity="0.3"/>
<rect x="244.63" y="18.20" width="3.60" height="4.00" fill="#ff0000"/>
<rect x="243.98" y="15.50" width="1.30" height="9.40" fill="#ff0000" opacity="0.3"/>
<rect x="247.58" y="15.50" width="1.30" height="9.40" fill="#ff0000" opacity="0.3"/>
<rect x="249.73" y="18.20" width="3.60" height="4.00" fill="#ff0000"/>
<rect x="249.08" y="15.50" width="1.30" height="9.40" fill="#ff0000" opacity="0.3"/>
<rect x="252.68" y="15.50" width="1.30" height="9.40" fill="#ff0000" opacity="0.3"/>
<rect x="254.65" y="18.20" width="3.60" height="4.00" fill="#ff0000"/>
<rect x="254.00" y="15.50" width="1.30" height="9.40" fill="#ff0000" opacity="0.3"/>
<rect x="257.60" y="15.50" width="1.30" height="9.40" fill="#ff0000" opacity="0.3"/>
<rect x="259.57" y="18.20" width="3.60" height="4.00" fill="#ff0000"/>
<rect x="258.92" y="15.50" width="1.30" height="9.40" fill="#ff0000" opacity="0.3"/>
<rect x="262.52" y="15.50" width="1.30" height="9.40" fill="#ff0000" opacity="0.3"/>
<rect x="264.48" y="18.20" width="3.60" height="4.00" fill="#ff0000"/>
<rect x="263.83" y="15.50" width="1.30" height="9.40" fill="#ff0000" opacity="0.3"/>
<rect x="267.43" y="15.50" width="1.30" height="9.40" fill="#ff0000" opacity="0.3"/>
<rect x="271.77" y="18.20" width="3.60" height="4.00" fill="#ff0000"/>
<rect x="271.12" y="15.50" width="1.30" height="9.40" fill="#ff0000" opacity="0.3"/>
<rect x="274.72" y="15.50" width="1.30" height="9.40" fill="#ff0000" opacity="0.3"/>
<rect x="279.23" y="18.20" width="3.60" height="4.00" fill="#ff0000"/>
<rect x="278.58" y="15.50" width="1.30" height="9.40" fill="#ff0000" opacity="0.3"/>
<rect x="282.18" y="15.50" width="1.30" height="9.40" fill="#ff0000" opacity="0.3"/>
<rect x="286.70" y="18.20" width="3.60" height="4.00" fill="#ff0000"/>
<rect x="286.05" y="15.50" width="1.30" height="9.40" fill="#ff0000" opacity="0.3"/>
<rect x="289.65" y="15.50" width="1.30" height="9.40" fill="#ff0000" opacity="0.3"/>
<rect x="306.91" y="18.20" width="3.60" height="4.00" fill="#ff0000"/>
<rect x="306.26" y="15.50" width="1.30" height="9.40" fill="#ff0000" opacity="0.3"/>
<rect x="309.86" y="15.50" width="1.30" height="9.40" fill="#ff0000" opacity="0.3"/>
<rect x="326.94" y="18.20" width="3.60" height="4.00" fill="#ff0000"/>
<rect x="326.29" y="15.50" width="1.30" height="9.40" fill="#ff0000" opacity="0.3"/>
<rect x="329.89" y="15.50" width="1.30" height="9.40" fill="#ff0000" opacity="0.3"/>
<rect x="347.15" y="18.20" width="3.60" height="4.00" fill="#ff0000"/>
<rect x="346.50" y="15.50" width="1.30" height="9.40" fill="#ff0000" opacity="0.3"/>
<rect x="350.10" y="15.50" width="1.30" height="9.40" fill="#ff0000" opacity="0.3"/>
<rect x="367.36" y="18.20" width="3.60" height="4.00" fill="#ff0000"/>
<rect x="366.71" y="15.50" width="1.30" height="9.40" fill="#ff0000" opacity="0.3"/>
<rect x="370.31" y="15.50" width="1.30" height="9.40" fill="#ff0000" opacity="0.3"/>
<rect x="387.39" y="18.20" width="3.60" height="4.00" fill="#ff0000"/>
<rect x="386.74" y="15.50" width="1.30" height="9.40" fill="#ff0000" opacity="0.3"/>
<rect x="390.34" y="15.50" width="1.30" height="9.40" fill="#ff0000" opacity="0.3"/>
<rect x="407.42" y="18.20" width="3.60" height="4.00" fill="#ff0000"/>
<rect x="406.77" y="15.50" width="1.30" height="9.40" fill="#ff0000" opacity="0.3"/>
<rect x="410.37" y="15.50" width="1.30" height="9.40" fill="#ff0000" opacity="0.3"/>
<rect x="418.17" y="18.20" width="3.60" height="4.00" fill="#ff0000"/>
<rect x="417.52" y="15.50" width="1.30" height="9.40" fill="#ff0000" opacity="0.3"/>
<rect x="421.12" y="15.50" width="1.30" height="9.40" fill="#ff0000" opacity="0.3"/>
<rect x="247.00" y="10.70" width="3.60" height="4.00" fill="#ff0000"/>
<rect x="246.35" y="8.00" width="1.30" height="9.40" fill="#ff0000" opacity="0.3"/>
<rect x="249.95" y="8.00" width="1.30" height="9.40" fill="#ff0000" opacity="0.3"/>
<rect x="281.78" y="10.70" width="3.60" height="4.00" fill="#ff0000"/>
<rect x="281.13" y="8.00" width="1.30" height="9.40" fill="#ff0000" opacity="0.3"/>
<rect x="284.73" y="8.00" width="1.30" height="9.40" fill="#ff0000" opacity="0.3"/>
<rect x="543.30" y="18.20" width="3.60" height="4.00" fill="#ff0000"/>
<rect x="542.65" y="15.50" width="1.30" height="9.40" fill="#ff0000" opacity="0.3"/>
<rect x="546.25" y="15.50" width="1.30" height="9.40" fill="#ff0000" opacity="0.3"/>
<rect x="566.06" y="18.20" width="3.60" height="4.00" fill="#ff0000"/>
<rect x="565.41" y="15.50" width="1.30" height="9.40" fill="#ff0000" opacity="0.3"/>
<rect x="569.01" y="15.50" width="1.30" height="9.40" fill="#ff0000" opacity="0.3"/>
<rect x="573.53" y="18.20" width="3.60" height="4.00" fill="#ff0000"/>
<rect x="572.88" y="15.50" width="1.30" height="9.40" fill="#ff0000" opacity="0.3"/>
<rect x="576.48" y="15.50" width="1.30" height="9.40" fill="#ff0000" opacity="0.3"/>
<rect x="580.08" y="18.20" width="3.60" height="4.00" fill="#ff0000"/>
<rect x="579.43" y="15.50" width="1.30" height="9.40" fill="#ff0000" opacity="0.3"/>
<rect x="583.03" y="15.50" width="1.30" height="9.40" fill="#ff0000" opacity="0.3"/>
<rect x="649.09" y="18.20" width="3.60" height="4.00" fill="#ff0000"/>
<rect x="648.44" y="15.50" width="1.30" height="9.40" fill="#ff0000" opacity="0.3"/>
<rect x="652.04" y="15.50" width="1.30" height="9.40" fill="#ff0000" opacity="0.3"/>
<rect x="546.03" y="10.70" width="3.60" height="4.00" fill="#ff0000"/>
<rect x="545.38" y="8.00" width="1.30" height="9.40" fill="#ff0000" opacity="0.3"/>
<rect x="548.98" y="8.00" width="1.30" height="9.40" fill="#ff0000" opacity="0.3"/>
<rect x="582.63" y="10.70" width="3.60" height="4.00" fill="#ff0000"/>
<rect x="581.98" y="8.00" width="1.30" height="9.40" fill="#ff0000" opacity="0.3"/>
<rect x="585.58" y="8.00" width="1.30" height="9.40" fill="#ff0000" opacity="0.3"/>
<rect x="213.00" y="18.20" width="1.60" height="4.00" fill="#ff0000"/>
<rect x="213.00" y="15.50" width="1.00" height="9.40" fill="#ff0000" opacity="0.3"/>
<rect x="213.60" y="15.50" width="1.00" height="9.40" fill="#ff0000" opacity="0.3"/>
<rect x="213.70" y="10.70" width="1.60" height="4.00" fill="#ff0000"/>
<rect x="213.70" y="8.00" width="1.00" height="9.40" fill="#ff0000" opacity="0.3"/>
<rect x="214.30" y="8.00" width="1.00" height="9.40" fill="#ff0000" opacity="0.3"/>
<rect x="214.40" y="3.50" width="1.60" height="4.00" fill="#ff0000"/>
<rect x="214.40" y="0.80" width="1.00" height="9.40" fill="#ff0000" opacity="0.3"/>
<rect x="215.00" y="0.80" width="1.00" height="9.40" fill="#ff0000" opacity="0.3"/>
<rect x="158.80" y="54.80" width="31.70" height="4.20" fill="#0aa562"/>
<rect x="158.80" y="52.20" width="1.15" height="9.40" fill="#0aa562" opacity="0.25"/>
<rect x="189.35" y="52.20" width="1.15" height="9.40" fill="#0aa562" opacity="0.25"/>
<rect x="190.50" y="52.30" width="1.50" height="9.20" fill="#9ecbe8"/>
<rect x="192.00" y="52.30" width="1.50" height="9.20" fill="#b9b9b9"/>
<rect x="193.50" y="54.80" width="4.00" height="4.20" fill="#1651b8"/>
<rect x="197.60" y="52.30" width="1.30" height="9.20" fill="#f5a38a"/>
<rect x="199.50" y="54.80" width="5.00" height="4.20" fill="#e8325f"/>
<rect x="199.30" y="52.30" width="0.90" height="9.20" fill="#f7b6c6"/>
<rect x="201.80" y="52.30" width="0.90" height="9.20" fill="#f7b6c6"/>
<rect x="204.40" y="52.30" width="0.90" height="9.20" fill="#f7b6c6"/>
<rect x="231.87" y="54.85" width="8.55" height="4.10" fill="#0f6623"/>
<rect x="231.87" y="52.20" width="1.15" height="9.40" fill="#0f6623"/>
<rect x="239.27" y="52.20" width="1.15" height="9.40" fill="#0f6623"/>
<rect x="245.16" y="54.85" width="4.92" height="4.10" fill="#0f6623"/>
<rect x="245.16" y="52.20" width="1.15" height="9.40" fill="#0f6623"/>
<rect x="248.93" y="52.20" width="1.15" height="9.40" fill="#0f6623"/>
<rect x="255.36" y="54.85" width="8.55" height="4.10" fill="#0f6623"/>
<rect x="255.36" y="52.20" width="1.15" height="9.40" fill="#0f6623"/>
<rect x="262.76" y="52.20" width="1.15" height="9.40" fill="#0f6623"/>
<rect x="269.20" y="54.85" width="8.55" height="4.10" fill="#0f6623"/>
<rect x="269.20" y="52.20" width="1.15" height="9.40" fill="#0f6623"/>
<rect x="276.60" y="52.20" width="1.15" height="9.40" fill="#0f6623"/>
<rect x="281.94" y="54.85" width="5.10" height="4.10" fill="#0f6623"/>
<rect x="281.94" y="52.20" width="1.15" height="9.40" fill="#0f6623"/>
<rect x="285.89" y="52.20" width="1.15" height="9.40" fill="#0f6623"/>
<rect x="295.60" y="54.85" width="8.56" height="4.10" fill="#0f6623"/>
<rect x="295.60" y="52.20" width="1.15" height="9.40" fill="#0f6623"/>
<rect x="303.01" y="52.20" width="1.15" height="9.40" fill="#0f6623"/>
<rect x="305.61" y="54.85" width="8.56" height="4.10" fill="#0f6623"/>
<rect x="305.61" y="52.20" width="1.15" height="9.40" fill="#0f6623"/>
<rect x="313.02" y="52.20" width="1.15" height="9.40" fill="#0f6623"/>
<rect x="315.63" y="54.85" width="8.56" height="4.10" fill="#0f6623"/>
<rect x="315.63" y="52.20" width="1.15" height="9.40" fill="#0f6623"/>
<rect x="323.04" y="52.20" width="1.15" height="9.40" fill="#0f6623"/>
<rect x="325.64" y="54.85" width="8.56" height="4.10" fill="#0f6623"/>
<rect x="325.64" y="52.20" width="1.15" height="9.40" fill="#0f6623"/>
<rect x="333.05" y="52.20" width="1.15" height="9.40" fill="#0f6623"/>
<rect x="335.66" y="54.85" width="8.56" height="4.10" fill="#0f6623"/>
<rect x="335.66" y="52.20" width="1.15" height="9.40" fill="#0f6623"/>
<rect x="343.07" y="52.20" width="1.15" height="9.40" fill="#0f6623"/>
<rect x="345.67" y="54.85" width="8.56" height="4.10" fill="#0f6623"/>
<rect x="345.67" y="52.20" width="1.15" height="9.40" fill="#0f6623"/>
<rect x="353.08" y="52.20" width="1.15" height="9.40" fill="#0f6623"/>
<rect x="355.69" y="54.85" width="8.56" height="4.10" fill="#0f6623"/>
<rect x="355.69" y="52.20" width="1.15" height="9.40" fill="#0f6623"/>
<rect x="363.10" y="52.20" width="1.15" height="9.40" fill="#0f6623"/>
<rect x="365.70" y="54.85" width="8.56" height="4.10" fill="#0f6623"/>
<rect x="365.70" y="52.20" width="1.15" height="9.40" fill="#0f6623"/>
<rect x="373.11" y="52.20" width="1.15" height="9.40" fill="#0f6623"/>
<rect x="375.72" y="54.85" width="8.56" height="4.10" fill="#0f6623"/>
<rect x="375.72" y="52.20" width="1.15" height="9.40" fill="#0f6623"/>
<rect x="383.13" y="52.20" width="1.15" height="9.40" fill="#0f6623"/>
<rect x="385.73" y="54.85" width="8.75" height="4.10" fill="#0f6623"/>
<rect x="385.73" y="52.20" width="1.15" height="9.40" fill="#0f6623"/>
<rect x="393.33" y="52.20" width="1.15" height="9.40" fill="#0f6623"/>
<rect x="399.03" y="54.85" width="6.19" height="4.10" fill="#0f6623"/>
<rect x="399.03" y="52.20" width="1.15" height="9.40" fill="#0f6623"/>
<rect x="404.07" y="52.20" width="1.15" height="9.40" fill="#0f6623"/>
<rect x="405.77" y="54.85" width="9.10" height="4.10" fill="#8dd0ef"/>
<rect x="405.77" y="52.20" width="1.15" height="9.40" fill="#8dd0ef"/>
<rect x="413.72" y="52.20" width="1.15" height="9.40" fill="#8dd0ef"/>
<rect x="285.58" y="47.85" width="8.38" height="4.10" fill="#0f6623"/>
<rect x="285.58" y="45.20" width="1.15" height="9.40" fill="#0f6623"/>
<rect x="292.81" y="45.20" width="1.15" height="9.40" fill="#0f6623"/>
<rect x="302.34" y="47.85" width="5.09" height="4.10" fill="#0f6623"/>
<rect x="302.34" y="45.20" width="1.15" height="9.40" fill="#0f6623"/>
<rect x="306.28" y="45.20" width="1.15" height="9.40" fill="#0f6623"/>
<rect x="332.56" y="47.85" width="5.10" height="4.10" fill="#0f6623"/>
<rect x="332.56" y="45.20" width="1.15" height="9.40" fill="#0f6623"/>
<rect x="336.51" y="45.20" width="1.15" height="9.40" fill="#0f6623"/>
<rect x="352.59" y="47.85" width="5.10" height="4.10" fill="#0f6623"/>
<rect x="352.59" y="45.20" width="1.15" height="9.40" fill="#0f6623"/>
<rect x="356.54" y="45.20" width="1.15" height="9.40" fill="#0f6623"/>
<rect x="362.61" y="47.85" width="5.10" height="4.10" fill="#0f6623"/>
<rect x="362.61" y="45.20" width="1.15" height="9.40" fill="#0f6623"/>
<rect x="366.56" y="45.20" width="1.15" height="9.40" fill="#0f6623"/>
<rect x="382.64" y="47.85" width="5.10" height="4.10" fill="#0f6623"/>
<rect x="382.64" y="45.20" width="1.15" height="9.40" fill="#0f6623"/>
<rect x="386.59" y="45.20" width="1.15" height="9.40" fill="#0f6623"/>
<rect x="255.83" y="45.65" width="1.60" height="8.50" fill="#1651b8"/>
<rect x="423.28" y="54.85" width="8.56" height="4.10" fill="#8dd0ef"/>
<rect x="423.28" y="52.20" width="1.15" height="9.40" fill="#8dd0ef"/>
<rect x="430.69" y="52.20" width="1.15" height="9.40" fill="#8dd0ef"/>
<rect x="440.03" y="54.85" width="8.56" height="4.10" fill="#8dd0ef"/>
<rect x="440.03" y="52.20" width="1.15" height="9.40" fill="#8dd0ef"/>
<rect x="447.44" y="52.20" width="1.15" height="9.40" fill="#8dd0ef"/>
<rect x="430.49" y="45.65" width="1.60" height="8.50" fill="#1651b8"/>
<rect x="455.51" y="54.85" width="8.19" height="4.10" fill="#0f6623"/>
<rect x="455.51" y="52.20" width="1.15" height="9.40" fill="#0f6623"/>
<rect x="462.55" y="52.20" width="1.15" height="9.40" fill="#0f6623"/>
<rect x="482.82" y="54.85" width="8.56" height="4.10" fill="#0f6623"/>
<rect x="482.82" y="52.20" width="1.15" height="9.40" fill="#0f6623"/>
<rect x="490.23" y="52.20" width="1.15" height="9.40" fill="#0f6623"/>
<rect x="510.50" y="54.85" width="8.74" height="4.10" fill="#0f6623"/>
<rect x="510.50" y="52.20" width="1.15" height="9.40" fill="#0f6623"/>
<rect x="518.09" y="52.20" width="1.15" height="9.40" fill="#0f6623"/>
<rect x="537.45" y="54.85" width="9.10" height="4.10" fill="#0f6623"/>
<rect x="537.45" y="52.20" width="1.15" height="9.40" fill="#0f6623"/>
<rect x="545.40" y="52.20" width="1.15" height="9.40" fill="#0f6623"/>
<rect x="564.76" y="54.85" width="9.11" height="4.10" fill="#0f6623"/>
<rect x="564.76" y="52.20" width="1.15" height="9.40" fill="#0f6623"/>
<rect x="572.72" y="52.20" width="1.15" height="9.40" fill="#0f6623"/>
<rect x="592.44" y="54.85" width="9.11" height="4.10" fill="#0f6623"/>
<rect x="592.44" y="52.20" width="1.15" height="9.40" fill="#0f6623"/>
<rect x="600.40" y="52.20" width="1.15" height="9.40" fill="#0f6623"/>
<rect x="606.28" y="54.85" width="9.11" height="4.10" fill="#0f6623"/>
<rect x="606.28" y="52.20" width="1.15" height="9.40" fill="#0f6623"/>
<rect x="614.24" y="52.20" width="1.15" height="9.40" fill="#0f6623"/>
<rect x="619.76" y="54.85" width="10.01" height="4.10" fill="#0f6623"/>
<rect x="619.76" y="52.20" width="1.15" height="9.40" fill="#0f6623"/>
<rect x="628.62" y="52.20" width="1.15" height="9.40" fill="#0f6623"/>
<rect x="629.77" y="54.85" width="10.02" height="4.10" fill="#0f6623"/>
<rect x="629.77" y="52.20" width="1.15" height="9.40" fill="#0f6623"/>
<rect x="638.64" y="52.20" width="1.15" height="9.40" fill="#0f6623"/>
<rect x="462.25" y="47.85" width="8.74" height="4.10" fill="#8dd0ef"/>
<rect x="462.25" y="45.20" width="1.15" height="9.40" fill="#8dd0ef"/>
<rect x="469.84" y="45.20" width="1.15" height="9.40" fill="#8dd0ef"/>
<rect x="489.74" y="47.85" width="8.92" height="4.10" fill="#8dd0ef"/>
<rect x="489.74" y="45.20" width="1.15" height="9.40" fill="#8dd0ef"/>
<rect x="497.51" y="45.20" width="1.15" height="9.40" fill="#8dd0ef"/>
<rect x="517.42" y="47.85" width="8.56" height="4.10" fill="#8dd0ef"/>
<rect x="517.42" y="45.20" width="1.15" height="9.40" fill="#8dd0ef"/>
<rect x="524.83" y="45.20" width="1.15" height="9.40" fill="#8dd0ef"/>
<rect x="544.37" y="47.85" width="9.10" height="4.10" fill="#8dd0ef"/>
<rect x="544.37" y="45.20" width="1.15" height="9.40" fill="#8dd0ef"/>
<rect x="552.32" y="45.20" width="1.15" height="9.40" fill="#8dd0ef"/>
<rect x="572.05" y="47.85" width="9.10" height="4.10" fill="#8dd0ef"/>
<rect x="572.05" y="45.20" width="1.15" height="9.40" fill="#8dd0ef"/>
<rect x="580.00" y="45.20" width="1.15" height="9.40" fill="#8dd0ef"/>
<rect x="469.64" y="52.65" width="1.60" height="8.50" fill="#1651b8"/>
<rect x="497.14" y="52.65" width="1.60" height="8.50" fill="#1651b8"/>
<rect x="524.81" y="52.65" width="1.60" height="8.50" fill="#1651b8"/>
<rect x="552.31" y="52.65" width="1.60" height="8.50" fill="#1651b8"/>
<rect x="579.81" y="52.65" width="1.60" height="8.50" fill="#1651b8"/>
<rect x="483.30" y="45.65" width="1.60" height="8.50" fill="#1651b8"/>
<rect x="538.47" y="45.65" width="1.60" height="8.50" fill="#1651b8"/>
<rect x="566.15" y="45.65" width="1.60" height="8.50" fill="#1651b8"/>
<rect x="599.36" y="47.85" width="9.47" height="4.10" fill="#0f6623"/>
<rect x="599.36" y="45.20" width="1.15" height="9.40" fill="#0f6623"/>
<rect x="607.68" y="45.20" width="1.15" height="9.40" fill="#0f6623"/>
<rect x="643.28" y="54.85" width="6.74" height="4.10" fill="#0f6623"/>
<rect x="643.28" y="52.20" width="1.15" height="9.40" fill="#0f6623"/>
<rect x="648.87" y="52.20" width="1.15" height="9.40" fill="#0f6623"/>
<rect x="653.66" y="54.85" width="9.65" height="4.10" fill="#0f6623"/>
<rect x="653.66" y="52.20" width="1.15" height="9.40" fill="#0f6623"/>
<rect x="662.16" y="52.20" width="1.15" height="9.40" fill="#0f6623"/>
<rect x="667.31" y="54.85" width="9.65" height="4.10" fill="#0f6623"/>
<rect x="667.31" y="52.20" width="1.15" height="9.40" fill="#0f6623"/>
<rect x="675.81" y="52.20" width="1.15" height="9.40" fill="#0f6623"/>
<rect x="680.97" y="54.85" width="9.65" height="4.10" fill="#0f6623"/>
<rect x="680.97" y="52.20" width="1.15" height="9.40" fill="#0f6623"/>
<rect x="689.47" y="52.20" width="1.15" height="9.40" fill="#0f6623"/>
<rect x="694.63" y="54.85" width="10.01" height="4.10" fill="#0f6623"/>
<rect x="694.63" y="52.20" width="1.15" height="9.40" fill="#0f6623"/>
<rect x="703.49" y="52.20" width="1.15" height="9.40" fill="#0f6623"/>
<rect x="704.64" y="54.85" width="9.65" height="4.10" fill="#0f6623"/>
<rect x="704.64" y="52.20" width="1.15" height="9.40" fill="#0f6623"/>
<rect x="713.14" y="52.20" width="1.15" height="9.40" fill="#0f6623"/>
<rect x="718.30" y="54.85" width="6.37" height="4.10" fill="#0f6623"/>
<rect x="718.30" y="52.20" width="1.15" height="9.40" fill="#0f6623"/>
<rect x="723.52" y="52.20" width="1.15" height="9.40" fill="#0f6623"/>
<rect x="728.32" y="54.85" width="10.01" height="4.10" fill="#0f6623"/>
<rect x="728.32" y="52.20" width="1.15" height="9.40" fill="#0f6623"/>
<rect x="737.18" y="52.20" width="1.15" height="9.40" fill="#0f6623"/>
<rect x="738.33" y="54.85" width="10.02" height="4.10" fill="#0f6623"/>
<rect x="738.33" y="52.20" width="1.15" height="9.40" fill="#0f6623"/>
<rect x="747.20" y="52.20" width="1.15" height="9.40" fill="#0f6623"/>
<rect x="751.99" y="54.85" width="6.37" height="4.10" fill="#0f6623"/>
<rect x="751.99" y="52.20" width="1.15" height="9.40" fill="#0f6623"/>
<rect x="757.21" y="52.20" width="1.15" height="9.40" fill="#0f6623"/>
<rect x="762.00" y="54.85" width="10.02" height="4.10" fill="#0f6623"/>
<rect x="762.00" y="52.20" width="1.15" height="9.40" fill="#0f6623"/>
<rect x="770.87" y="52.20" width="1.15" height="9.40" fill="#0f6623"/>
<rect x="775.66" y="54.85" width="8.19" height="4.10" fill="#0f6623"/>
<rect x="775.66" y="52.20" width="1.15" height="9.40" fill="#0f6623"/>
<rect x="782.70" y="52.20" width="1.15" height="9.40" fill="#0f6623"/>
<rect x="789.32" y="54.85" width="5.09" height="4.10" fill="#0f6623"/>
<rect x="789.32" y="52.20" width="1.15" height="9.40" fill="#0f6623"/>
<rect x="793.26" y="52.20" width="1.15" height="9.40" fill="#0f6623"/>
<rect x="799.33" y="54.85" width="8.20" height="4.10" fill="#0f6623"/>
<rect x="799.33" y="52.20" width="1.15" height="9.40" fill="#0f6623"/>
<rect x="806.38" y="52.20" width="1.15" height="9.40" fill="#0f6623"/>
<rect x="812.99" y="54.85" width="8.56" height="4.10" fill="#0f6623"/>
<rect x="812.99" y="52.20" width="1.15" height="9.40" fill="#0f6623"/>
<rect x="820.40" y="52.20" width="1.15" height="9.40" fill="#0f6623"/>
<rect x="826.28" y="54.85" width="9.47" height="4.10" fill="#0f6623"/>
<rect x="826.28" y="52.20" width="1.15" height="9.40" fill="#0f6623"/>
<rect x="834.60" y="52.20" width="1.15" height="9.40" fill="#0f6623"/>
<rect x="840.30" y="54.85" width="5.47" height="4.10" fill="#0f6623"/>
<rect x="840.30" y="52.20" width="1.15" height="9.40" fill="#0f6623"/>
<rect x="844.62" y="52.20" width="1.15" height="9.40" fill="#0f6623"/>
<rect x="850.32" y="54.85" width="4.91" height="4.10" fill="#0f6623"/>
<rect x="850.32" y="52.20" width="1.15" height="9.40" fill="#0f6623"/>
<rect x="854.08" y="52.20" width="1.15" height="9.40" fill="#0f6623"/>
<rect x="646.74" y="47.85" width="9.65" height="4.10" fill="#0f6623"/>
<rect x="646.74" y="45.20" width="1.15" height="9.40" fill="#0f6623"/>
<rect x="655.24" y="45.20" width="1.15" height="9.40" fill="#0f6623"/>
<rect x="711.38" y="47.85" width="10.20" height="4.10" fill="#0f6623"/>
<rect x="711.38" y="45.20" width="1.15" height="9.40" fill="#0f6623"/>
<rect x="720.43" y="45.20" width="1.15" height="9.40" fill="#0f6623"/>
<rect x="745.07" y="47.85" width="10.19" height="4.10" fill="#0f6623"/>
<rect x="745.07" y="45.20" width="1.15" height="9.40" fill="#0f6623"/>
<rect x="754.11" y="45.20" width="1.15" height="9.40" fill="#0f6623"/>
<rect x="782.40" y="47.85" width="8.37" height="4.10" fill="#0f6623"/>
<rect x="782.40" y="45.20" width="1.15" height="9.40" fill="#0f6623"/>
<rect x="789.62" y="45.20" width="1.15" height="9.40" fill="#0f6623"/>
<rect x="833.38" y="47.85" width="9.11" height="4.10" fill="#8dd0ef"/>
<rect x="833.38" y="45.20" width="1.15" height="9.40" fill="#8dd0ef"/>
<rect x="841.34" y="45.20" width="1.15" height="9.40" fill="#8dd0ef"/>
<rect x="853.41" y="47.85" width="9.11" height="4.10" fill="#8dd0ef"/>
<rect x="853.41" y="45.20" width="1.15" height="9.40" fill="#8dd0ef"/>
<rect x="861.37" y="45.20" width="1.15" height="9.40" fill="#8dd0ef"/>
<rect x="696.92" y="45.65" width="1.60" height="8.50" fill="#1651b8"/>
<rect x="860.00" y="54.85" width="9.10" height="4.10" fill="#0f6623"/>
<rect x="860.00" y="52.20" width="1.15" height="9.40" fill="#0f6623"/>
<rect x="867.95" y="52.20" width="1.15" height="9.40" fill="#0f6623"/>
<rect x="874.57" y="54.85" width="8.56" height="4.10" fill="#0f6623"/>
<rect x="874.57" y="52.20" width="1.15" height="9.40" fill="#0f6623"/>
<rect x="881.98" y="52.20" width="1.15" height="9.40" fill="#0f6623"/>
<rect x="887.86" y="54.85" width="8.92" height="4.10" fill="#0f6623"/>
<rect x="887.86" y="52.20" width="1.15" height="9.40" fill="#0f6623"/>
<rect x="895.63" y="52.20" width="1.15" height="9.40" fill="#0f6623"/>
<rect x="901.52" y="54.85" width="8.92" height="4.10" fill="#0f6623"/>
<rect x="901.52" y="52.20" width="1.15" height="9.40" fill="#0f6623"/>
<rect x="909.29" y="52.20" width="1.15" height="9.40" fill="#0f6623"/>
<rect x="915.17" y="54.85" width="8.93" height="4.10" fill="#0f6623"/>
<rect x="915.17" y="52.20" width="1.15" height="9.40" fill="#0f6623"/>
<rect x="922.95" y="52.20" width="1.15" height="9.40" fill="#0f6623"/>
<rect x="928.83" y="54.85" width="9.11" height="4.10" fill="#0f6623"/>
<rect x="928.83" y="52.20" width="1.15" height="9.40" fill="#0f6623"/>
<rect x="936.79" y="52.20" width="1.15" height="9.40" fill="#0f6623"/>
<rect x="956.51" y="54.85" width="8.74" height="4.10" fill="#0f6623"/>
<rect x="956.51" y="52.20" width="1.15" height="9.40" fill="#0f6623"/>
<rect x="964.10" y="52.20" width="1.15" height="9.40" fill="#0f6623"/>
<rect x="969.80" y="54.85" width="9.47" height="4.10" fill="#0f6623"/>
<rect x="969.80" y="52.20" width="1.15" height="9.40" fill="#0f6623"/>
<rect x="978.12" y="52.20" width="1.15" height="9.40" fill="#0f6623"/>
<rect x="983.82" y="54.85" width="10.02" height="4.10" fill="#0f6623"/>
<rect x="983.82" y="52.20" width="1.15" height="9.40" fill="#0f6623"/>
<rect x="992.69" y="52.20" width="1.15" height="9.40" fill="#0f6623"/>
<rect x="993.84" y="54.85" width="5.46" height="4.10" fill="#0f6623"/>
<rect x="993.84" y="52.20" width="1.15" height="9.40" fill="#0f6623"/>
<rect x="998.15" y="52.20" width="1.15" height="9.40" fill="#0f6623"/>
<rect x="1003.85" y="54.85" width="9.11" height="4.10" fill="#0f6623"/>
<rect x="1003.85" y="52.20" width="1.15" height="9.40" fill="#0f6623"/>
<rect x="1011.81" y="52.20" width="1.15" height="9.40" fill="#0f6623"/>
<rect x="1017.51" y="54.85" width="9.11" height="4.10" fill="#0f6623"/>
<rect x="1017.51" y="52.20" width="1.15" height="9.40" fill="#0f6623"/>
<rect x="1025.47" y="52.20" width="1.15" height="9.40" fill="#0f6623"/>
<rect x="1031.17" y="54.85" width="9.10" height="4.10" fill="#0f6623"/>
<rect x="1031.17" y="52.20" width="1.15" height="9.40" fill="#0f6623"/>
<rect x="1039.12" y="52.20" width="1.15" height="9.40" fill="#0f6623"/>
<rect x="1044.82" y="54.85" width="9.66" height="4.10" fill="#0f6623"/>
<rect x="1044.82" y="52.20" width="1.15" height="9.40" fill="#0f6623"/>
<rect x="1053.33" y="52.20" width="1.15" height="9.40" fill="#0f6623"/>
<rect x="1078.88" y="54.85" width="9.65" height="4.10" fill="#0f6623"/>
<rect x="1078.88" y="52.20" width="1.15" height="9.40" fill="#0f6623"/>
<rect x="1087.38" y="52.20" width="1.15" height="9.40" fill="#0f6623"/>
<rect x="1058.48" y="54.85" width="9.65" height="4.10" fill="#8dd0ef"/>
<rect x="1058.48" y="52.20" width="1.15" height="9.40" fill="#8dd0ef"/>
<rect x="1066.98" y="52.20" width="1.15" height="9.40" fill="#8dd0ef"/>
<rect x="880.94" y="47.85" width="8.74" height="4.10" fill="#8dd0ef"/>
<rect x="880.94" y="45.20" width="1.15" height="9.40" fill="#8dd0ef"/>
<rect x="888.53" y="45.20" width="1.15" height="9.40" fill="#8dd0ef"/>
<rect x="908.62" y="47.85" width="9.10" height="4.10" fill="#8dd0ef"/>
<rect x="908.62" y="45.20" width="1.15" height="9.40" fill="#8dd0ef"/>
<rect x="916.57" y="45.20" width="1.15" height="9.40" fill="#8dd0ef"/>
<rect x="935.57" y="47.85" width="9.10" height="4.10" fill="#8dd0ef"/>
<rect x="935.57" y="45.20" width="1.15" height="9.40" fill="#8dd0ef"/>
<rect x="943.52" y="45.20" width="1.15" height="9.40" fill="#8dd0ef"/>
<rect x="963.25" y="47.85" width="9.10" height="4.10" fill="#8dd0ef"/>
<rect x="963.25" y="45.20" width="1.15" height="9.40" fill="#8dd0ef"/>
<rect x="971.20" y="45.20" width="1.15" height="9.40" fill="#8dd0ef"/>
<rect x="1010.77" y="47.85" width="9.47" height="4.10" fill="#0f6623"/>
<rect x="1010.77" y="45.20" width="1.15" height="9.40" fill="#0f6623"/>
<rect x="1019.09" y="45.20" width="1.15" height="9.40" fill="#0f6623"/>
<rect x="1065.40" y="47.85" width="9.83" height="4.10" fill="#0f6623"/>
<rect x="1065.40" y="45.20" width="1.15" height="9.40" fill="#0f6623"/>
<rect x="1074.08" y="45.20" width="1.15" height="9.40" fill="#0f6623"/>
<rect x="1099.29" y="54.85" width="10.02" height="4.10" fill="#8dd0ef"/>
<rect x="1099.29" y="52.20" width="1.15" height="9.40" fill="#8dd0ef"/>
<rect x="1108.16" y="52.20" width="1.15" height="9.40" fill="#8dd0ef"/>
<rect x="1113.31" y="54.85" width="10.02" height="4.10" fill="#0f6623"/>
<rect x="1113.31" y="52.20" width="1.15" height="9.40" fill="#0f6623"/>
<rect x="1122.18" y="52.20" width="1.15" height="9.40" fill="#0f6623"/>
<rect x="1126.97" y="54.85" width="10.02" height="4.10" fill="#0f6623"/>
<rect x="1126.97" y="52.20" width="1.15" height="9.40" fill="#0f6623"/>
<rect x="1135.84" y="52.20" width="1.15" height="9.40" fill="#0f6623"/>
<rect x="1143.72" y="54.85" width="6.38" height="4.10" fill="#0f6623"/>
<rect x="1143.72" y="52.20" width="1.15" height="9.40" fill="#0f6623"/>
<rect x="1148.95" y="52.20" width="1.15" height="9.40" fill="#0f6623"/>
<rect x="1157.02" y="54.85" width="10.01" height="4.10" fill="#0f6623"/>
<rect x="1157.02" y="52.20" width="1.15" height="9.40" fill="#0f6623"/>
<rect x="1165.88" y="52.20" width="1.15" height="9.40" fill="#0f6623"/>
<rect x="1170.67" y="54.85" width="10.02" height="4.10" fill="#0f6623"/>
<rect x="1170.67" y="52.20" width="1.15" height="9.40" fill="#0f6623"/>
<rect x="1179.54" y="52.20" width="1.15" height="9.40" fill="#0f6623"/>
<rect x="1194.35" y="54.85" width="10.37" height="4.10" fill="#0f6623"/>
<rect x="1194.35" y="52.20" width="1.15" height="9.40" fill="#0f6623"/>
<rect x="1203.57" y="52.20" width="1.15" height="9.40" fill="#0f6623"/>
<rect x="1207.64" y="54.85" width="10.38" height="4.10" fill="#0f6623"/>
<rect x="1207.64" y="52.20" width="1.15" height="9.40" fill="#0f6623"/>
<rect x="1216.87" y="52.20" width="1.15" height="9.40" fill="#0f6623"/>
<rect x="1221.66" y="54.85" width="10.56" height="4.10" fill="#0f6623"/>
<rect x="1221.66" y="52.20" width="1.15" height="9.40" fill="#0f6623"/>
<rect x="1231.07" y="52.20" width="1.15" height="9.40" fill="#0f6623"/>
<rect x="1106.03" y="47.85" width="10.38" height="4.10" fill="#0f6623"/>
<rect x="1106.03" y="45.20" width="1.15" height="9.40" fill="#0f6623"/>
<rect x="1115.26" y="45.20" width="1.15" height="9.40" fill="#0f6623"/>
<rect x="1136.99" y="47.85" width="10.01" height="4.10" fill="#0f6623"/>
<rect x="1136.99" y="45.20" width="1.15" height="9.40" fill="#0f6623"/>
<rect x="1145.85" y="45.20" width="1.15" height="9.40" fill="#0f6623"/>
<rect x="1163.75" y="47.85" width="10.57" height="4.10" fill="#0f6623"/>
<rect x="1163.75" y="45.20" width="1.15" height="9.40" fill="#0f6623"/>
<rect x="1173.17" y="45.20" width="1.15" height="9.40" fill="#0f6623"/>
<rect x="1177.59" y="47.85" width="6.74" height="4.10" fill="#0f6623"/>
<rect x="1177.59" y="45.20" width="1.15" height="9.40" fill="#0f6623"/>
<rect x="1183.18" y="45.20" width="1.15" height="9.40" fill="#0f6623"/>
<rect x="1225.30" y="47.85" width="14.20" height="4.10" fill="#9dc183"/>
<rect x="1225.30" y="45.20" width="1.15" height="9.40" fill="#9dc183"/>
<rect x="1238.35" y="45.20" width="1.15" height="9.40" fill="#9dc183"/>
<rect x="1146.64" y="40.85" width="6.73" height="4.10" fill="#0f6623"/>
<rect x="1146.64" y="38.20" width="1.15" height="9.40" fill="#0f6623"/>
<rect x="1152.22" y="38.20" width="1.15" height="9.40" fill="#0f6623"/>
<rect x="1180.69" y="40.85" width="10.38" height="4.10" fill="#0f6623"/>
<rect x="1180.69" y="38.20" width="1.15" height="9.40" fill="#0f6623"/>
<rect x="1189.92" y="38.20" width="1.15" height="9.40" fill="#0f6623"/>
<rect x="1239.50" y="54.70" width="14.03" height="4.40" fill="#1651b8"/>
<rect x="1238.80" y="52.20" width="1.50" height="9.40" fill="#1651b8"/>
<rect x="1253.13" y="52.20" width="22.65" height="9.40" fill="#b5c9ef"/>
<rect x="1253.83" y="52.20" width="21.25" height="9.40" fill="#84a6e3"/>
<rect x="1254.13" y="54.80" width="20.65" height="4.20" fill="#628cda"/>
<rect x="1275.74" y="52.30" width="1.20" height="9.20" fill="#9fc7ee"/>
<rect x="1276.47" y="52.30" width="0.80" height="9.20" fill="#cfe3f7"/>
<rect x="150.00" y="84.70" width="25.30" height="4.20" fill="#0aa562"/>
<rect x="150.00" y="82.10" width="1.15" height="9.40" fill="#0aa562" opacity="0.25"/>
<rect x="174.15" y="82.10" width="1.15" height="9.40" fill="#0aa562" opacity="0.25"/>
<rect x="175.30" y="82.20" width="1.30" height="9.20" fill="#9ecbe8"/>
<rect x="176.60" y="82.20" width="1.60" height="9.20" fill="#b9b9b9"/>
<rect x="178.20" y="84.70" width="19.00" height="4.20" fill="#1651b8"/>
<rect x="197.20" y="82.20" width="1.20" height="9.20" fill="#d9e4f6"/>
<rect x="199.30" y="84.80" width="3.00" height="4.00" fill="#c81414"/>
<rect x="198.65" y="82.10" width="1.30" height="9.40" fill="#c81414" opacity="0.3"/>
<rect x="201.65" y="82.10" width="1.30" height="9.40" fill="#c81414" opacity="0.3"/>
<rect x="216.80" y="84.60" width="1.20" height="4.40" fill="#c5e63c"/>
<rect x="216.80" y="82.20" width="1.20" height="9.20" fill="#c5e63c55"/>
<rect x="231.80" y="75.00" width="0.80" height="9.00" fill="#b5bf7a"/>
<rect x="231.89" y="84.80" width="3.60" height="4.00" fill="#c5e63c"/>
<rect x="231.24" y="82.10" width="1.30" height="9.40" fill="#c5e63c" opacity="0.25"/>
<rect x="234.84" y="82.10" width="1.30" height="9.40" fill="#c5e63c" opacity="0.25"/>
<rect x="249.11" y="82.20" width="1.20" height="9.20" fill="#86a9dc"/>
<rect x="250.64" y="84.80" width="3.60" height="4.00" fill="#c5e63c"/>
<rect x="249.99" y="82.10" width="1.30" height="9.40" fill="#c5e63c" opacity="0.25"/>
<rect x="253.59" y="82.10" width="1.30" height="9.40" fill="#c5e63c" opacity="0.25"/>
<rect x="256.11" y="84.80" width="3.60" height="4.00" fill="#c5e63c"/>
<rect x="255.46" y="82.10" width="1.30" height="9.40" fill="#c5e63c" opacity="0.25"/>
<rect x="259.06" y="82.10" width="1.30" height="9.40" fill="#c5e63c" opacity="0.25"/>
<rect x="265.76" y="84.80" width="3.60" height="4.00" fill="#c5e63c"/>
<rect x="265.11" y="82.10" width="1.30" height="9.40" fill="#c5e63c" opacity="0.25"/>
<rect x="268.71" y="82.10" width="1.30" height="9.40" fill="#c5e63c" opacity="0.25"/>
<rect x="278.32" y="84.80" width="3.60" height="4.00" fill="#c5e63c"/>
<rect x="277.67" y="82.10" width="1.30" height="9.40" fill="#c5e63c" opacity="0.25"/>
<rect x="281.27" y="82.10" width="1.30" height="9.40" fill="#c5e63c" opacity="0.25"/>
<rect x="283.52" y="84.80" width="3.40" height="4.00" fill="#1b2559"/>
<rect x="282.87" y="82.10" width="1.30" height="9.40" fill="#1b2559" opacity="0.15"/>
<rect x="286.27" y="82.10" width="1.30" height="9.40" fill="#1b2559" opacity="0.15"/>
<rect x="288.62" y="84.80" width="3.40" height="4.00" fill="#1b2559"/>
<rect x="287.97" y="82.10" width="1.30" height="9.40" fill="#1b2559" opacity="0.15"/>
<rect x="291.37" y="82.10" width="1.30" height="9.40" fill="#1b2559" opacity="0.15"/>
<rect x="293.90" y="84.80" width="3.40" height="4.00" fill="#1b2559"/>
<rect x="293.25" y="82.10" width="1.30" height="9.40" fill="#1b2559" opacity="0.15"/>
<rect x="296.65" y="82.10" width="1.30" height="9.40" fill="#1b2559" opacity="0.15"/>
<rect x="299.00" y="84.80" width="3.40" height="4.00" fill="#1b2559"/>
<rect x="298.35" y="82.10" width="1.30" height="9.40" fill="#1b2559" opacity="0.15"/>
<rect x="301.75" y="82.10" width="1.30" height="9.40" fill="#1b2559" opacity="0.15"/>
<rect x="304.28" y="84.80" width="3.40" height="4.00" fill="#1b2559"/>
<rect x="303.63" y="82.10" width="1.30" height="9.40" fill="#1b2559" opacity="0.15"/>
<rect x="307.03" y="82.10" width="1.30" height="9.40" fill="#1b2559" opacity="0.15"/>
<rect x="309.38" y="84.80" width="3.40" height="4.00" fill="#1b2559"/>
<rect x="308.73" y="82.10" width="1.30" height="9.40" fill="#1b2559" opacity="0.15"/>
<rect x="312.13" y="82.10" width="1.30" height="9.40" fill="#1b2559" opacity="0.15"/>
<rect x="314.66" y="84.80" width="3.40" height="4.00" fill="#1b2559"/>
<rect x="314.01" y="82.10" width="1.30" height="9.40" fill="#1b2559" opacity="0.15"/>
<rect x="317.41" y="82.10" width="1.30" height="9.40" fill="#1b2559" opacity="0.15"/>
<rect x="319.94" y="84.80" width="3.40" height="4.00" fill="#1b2559"/>
<rect x="319.29" y="82.10" width="1.30" height="9.40" fill="#1b2559" opacity="0.15"/>
<rect x="322.69" y="82.10" width="1.30" height="9.40" fill="#1b2559" opacity="0.15"/>
<rect x="280.97" y="76.90" width="3.40" height="4.00" fill="#1b2559"/>
<rect x="280.32" y="74.20" width="1.30" height="9.40" fill="#1b2559" opacity="0.15"/>
<rect x="283.72" y="74.20" width="1.30" height="9.40" fill="#1b2559" opacity="0.15"/>
<rect x="296.63" y="76.90" width="3.40" height="4.00" fill="#1b2559"/>
<rect x="295.98" y="74.20" width="1.30" height="9.40" fill="#1b2559" opacity="0.15"/>
<rect x="299.38" y="74.20" width="1.30" height="9.40" fill="#1b2559" opacity="0.15"/>
<rect x="406.99" y="82.20" width="1.20" height="9.20" fill="#86a9dc"/>
<rect x="408.15" y="84.80" width="3.60" height="4.00" fill="#c5e63c"/>
<rect x="407.50" y="82.10" width="1.30" height="9.40" fill="#c5e63c" opacity="0.25"/>
<rect x="411.10" y="82.10" width="1.30" height="9.40" fill="#c5e63c" opacity="0.25"/>
<rect x="414.34" y="84.80" width="3.60" height="4.00" fill="#c5e63c"/>
<rect x="413.69" y="82.10" width="1.30" height="9.40" fill="#c5e63c" opacity="0.25"/>
<rect x="417.29" y="82.10" width="1.30" height="9.40" fill="#c5e63c" opacity="0.25"/>
<rect x="431.41" y="84.80" width="3.40" height="4.00" fill="#1b2559"/>
<rect x="430.76" y="82.10" width="1.30" height="9.40" fill="#1b2559" opacity="0.15"/>
<rect x="434.16" y="82.10" width="1.30" height="9.40" fill="#1b2559" opacity="0.15"/>
<rect x="442.70" y="84.80" width="3.40" height="4.00" fill="#1b2559"/>
<rect x="442.05" y="82.10" width="1.30" height="9.40" fill="#1b2559" opacity="0.15"/>
<rect x="445.45" y="82.10" width="1.30" height="9.40" fill="#1b2559" opacity="0.15"/>
<rect x="477.30" y="84.80" width="3.40" height="4.00" fill="#1b2559"/>
<rect x="476.65" y="82.10" width="1.30" height="9.40" fill="#1b2559" opacity="0.15"/>
<rect x="480.05" y="82.10" width="1.30" height="9.40" fill="#1b2559" opacity="0.15"/>
<rect x="505.16" y="84.80" width="3.40" height="4.00" fill="#1b2559"/>
<rect x="504.51" y="82.10" width="1.30" height="9.40" fill="#1b2559" opacity="0.15"/>
<rect x="507.91" y="82.10" width="1.30" height="9.40" fill="#1b2559" opacity="0.15"/>
<rect x="532.47" y="84.80" width="3.40" height="4.00" fill="#1b2559"/>
<rect x="531.82" y="82.10" width="1.30" height="9.40" fill="#1b2559" opacity="0.15"/>
<rect x="535.22" y="82.10" width="1.30" height="9.40" fill="#1b2559" opacity="0.15"/>
<rect x="560.33" y="84.80" width="3.40" height="4.00" fill="#1b2559"/>
<rect x="559.68" y="82.10" width="1.30" height="9.40" fill="#1b2559" opacity="0.15"/>
<rect x="563.08" y="82.10" width="1.30" height="9.40" fill="#1b2559" opacity="0.15"/>
<rect x="581.82" y="84.80" width="3.40" height="4.00" fill="#1b2559"/>
<rect x="581.17" y="82.10" width="1.30" height="9.40" fill="#1b2559" opacity="0.15"/>
<rect x="584.57" y="82.10" width="1.30" height="9.40" fill="#1b2559" opacity="0.15"/>
<rect x="622.24" y="84.80" width="3.40" height="4.00" fill="#1b2559"/>
<rect x="621.59" y="82.10" width="1.30" height="9.40" fill="#1b2559" opacity="0.15"/>
<rect x="624.99" y="82.10" width="1.30" height="9.40" fill="#1b2559" opacity="0.15"/>
<rect x="539.84" y="84.80" width="3.60" height="4.00" fill="#c5e63c"/>
<rect x="539.19" y="82.10" width="1.30" height="9.40" fill="#c5e63c" opacity="0.25"/>
<rect x="542.79" y="82.10" width="1.30" height="9.40" fill="#c5e63c" opacity="0.25"/>
<rect x="569.88" y="84.80" width="3.60" height="4.00" fill="#c5e63c"/>
<rect x="569.23" y="82.10" width="1.30" height="9.40" fill="#c5e63c" opacity="0.25"/>
<rect x="572.83" y="82.10" width="1.30" height="9.40" fill="#c5e63c" opacity="0.25"/>
<rect x="576.62" y="84.80" width="3.60" height="4.00" fill="#c5e63c"/>
<rect x="575.97" y="82.10" width="1.30" height="9.40" fill="#c5e63c" opacity="0.25"/>
<rect x="579.57" y="82.10" width="1.30" height="9.40" fill="#c5e63c" opacity="0.25"/>
<rect x="562.60" y="76.90" width="3.60" height="4.00" fill="#c5e63c"/>
<rect x="561.95" y="74.20" width="1.30" height="9.40" fill="#c5e63c" opacity="0.25"/>
<rect x="565.55" y="74.20" width="1.30" height="9.40" fill="#c5e63c" opacity="0.25"/>
<rect x="579.17" y="76.90" width="3.60" height="4.00" fill="#c5e63c"/>
<rect x="578.52" y="74.20" width="1.30" height="9.40" fill="#c5e63c" opacity="0.25"/>
<rect x="582.12" y="74.20" width="1.30" height="9.40" fill="#c5e63c" opacity="0.25"/>
<rect x="639.21" y="84.80" width="3.40" height="4.00" fill="#1b2559"/>
<rect x="638.56" y="82.10" width="1.30" height="9.40" fill="#1b2559" opacity="0.15"/>
<rect x="641.96" y="82.10" width="1.30" height="9.40" fill="#1b2559" opacity="0.15"/>
<rect x="645.95" y="84.80" width="3.40" height="4.00" fill="#1b2559"/>
<rect x="645.30" y="82.10" width="1.30" height="9.40" fill="#1b2559" opacity="0.15"/>
<rect x="648.70" y="82.10" width="1.30" height="9.40" fill="#1b2559" opacity="0.15"/>
<rect x="649.67" y="84.80" width="3.60" height="4.00" fill="#c5e63c"/>
<rect x="649.02" y="82.10" width="1.30" height="9.40" fill="#c5e63c" opacity="0.25"/>
<rect x="652.62" y="82.10" width="1.30" height="9.40" fill="#c5e63c" opacity="0.25"/>
<rect x="648.60" y="75.00" width="1.00" height="10.00" fill="#a9c4ea"/>
<rect x="669.98" y="76.90" width="3.40" height="4.00" fill="#1b2559"/>
<rect x="669.33" y="74.20" width="1.30" height="9.40" fill="#1b2559" opacity="0.15"/>
<rect x="672.73" y="74.20" width="1.30" height="9.40" fill="#1b2559" opacity="0.15"/>
<rect x="670.05" y="84.70" width="6.37" height="4.20" fill="#9dc183"/>
<rect x="670.05" y="82.10" width="1.15" height="9.40" fill="#9dc183" opacity="0.35"/>
<rect x="675.27" y="82.10" width="1.15" height="9.40" fill="#9dc183" opacity="0.35"/>
<rect x="676.42" y="84.70" width="578.02" height="4.20" fill="#1651b8"/>
<rect x="1254.04" y="82.10" width="17.18" height="9.40" fill="#b5c9ef"/>
<rect x="1254.74" y="82.10" width="15.78" height="9.40" fill="#84a6e3"/>
<rect x="1255.04" y="84.70" width="15.18" height="4.20" fill="#628cda"/>
<rect x="1270.82" y="84.70" width="2.20" height="4.20" fill="#1651b8"/>
<rect x="1276.47" y="82.20" width="1.20" height="9.20" fill="#bcc9a0"/>
<rect x="1277.93" y="82.20" width="1.40" height="9.20" fill="#a9cdf0"/>
<rect x="155.00" y="106.80" width="28.50" height="4.20" fill="#0aa562"/>
<rect x="155.00" y="104.20" width="1.15" height="9.40" fill="#0aa562" opacity="0.25"/>
<rect x="182.35" y="104.20" width="1.15" height="9.40" fill="#0aa562" opacity="0.25"/>
<rect x="183.50" y="104.30" width="1.20" height="9.20" fill="#9ecbe8"/>
<rect x="184.70" y="104.30" width="1.50" height="9.20" fill="#b9b9b9"/>
<rect x="186.20" y="106.80" width="11.00" height="4.20" fill="#1651b8"/>
<rect x="197.20" y="104.30" width="1.00" height="9.20" fill="#d9e4f6"/>
<rect x="198.60" y="104.30" width="1.20" height="9.20" fill="#f5a38a"/>
<rect x="1231.82" y="104.30" width="0.90" height="9.20" fill="#c0cba0"/>
<rect x="1243.66" y="104.30" width="0.90" height="9.20" fill="#a9bfd6"/>
<rect x="1252.22" y="104.20" width="18.09" height="9.40" fill="#b5c9ef"/>
<rect x="1252.92" y="104.20" width="16.69" height="9.40" fill="#84a6e3"/>
<rect x="1253.22" y="106.80" width="16.09" height="4.20" fill="#628cda"/>
<rect x="1273.19" y="106.80" width="3.00" height="4.20" fill="#1651b8"/>
<rect x="1272.33" y="104.30" width="1.00" height="9.20" fill="#c5d6f2"/>
<rect x="1276.47" y="104.30" width="1.00" height="9.20" fill="#c5d6f2"/>
<rect x="1277.38" y="104.30" width="1.00" height="9.20" fill="#9fc7ee"/>
</g>
<rect x="115" y="215" width="0.9" height="9.5" fill="#d5d9a0"/>
<polyline fill="none" stroke="#d62728" stroke-width="2" stroke-linejoin="round" points="198.3,253.2 199.7,249.4 201.2,246.1 203.1,242.7 204.6,241.7 206.9,241.2 208.8,240.4 210.4,241.2 211.3,242.3 212.6,241.3 214.6,241.0 216.8,239.8 219.3,238.7 220.7,239.1 222.2,237.9 224.1,238.3 226.0,237.3 227.9,236.6 229.8,235.6 231.4,234.9 232.1,233.1 233.1,234.1 234.2,232.2 235.9,231.4 237.5,231.8 239.4,230.7 241.3,230.5 243.2,231.8 246.1,234.1 248.9,237.0 251.8,239.8 254.7,242.7 256.9,244.6 259.4,247.8 260.4,248.4 261.9,245.0 263.2,245.9 265.2,248.4 268.0,250.9 270.9,251.8 273.7,253.0 275.7,253.2 1232.0,253.2 1232.3,251.5 1238.0,251.3 1239.0,250.0 1241.5,250.0 1242.5,251.5 1250.0,251.6 1251.2,253.0"/>
<polyline fill="none" stroke="#2ca02c" stroke-width="2" stroke-linejoin="round" points="121.6,286.8 122.9,286.0 125.8,285.3 130.5,284.9 135.3,285.1 142.0,285.8 148.7,286.8 157.3,286.8 178.3,286.8 180.2,285.8 184.0,285.6 191.6,285.8 199.3,286.0 200.6,286.0 201.0,281.3 201.8,281.1 202.1,286.0 204.1,286.2 205.4,286.0 206.2,280.9 207.9,280.3 209.8,279.5 212.6,278.8 214.6,279.5 216.5,278.0 217.4,274.2 218.4,277.1 219.3,272.3 219.9,278.0 220.7,270.4 221.4,266.9 222.6,266.6 223.7,268.1 224.5,272.3 225.1,270.4 226.0,274.2 227.0,270.0 228.3,272.3 229.8,270.8 231.7,272.9 233.7,271.5 235.9,270.8 237.9,271.7 239.4,274.2 240.3,280.9 240.9,285.3 242.2,286.4 244.2,285.6 246.1,286.0 246.8,279.0 247.6,279.3 248.2,285.6 250.8,286.4 252.7,284.1 254.7,285.6 256.6,284.3 258.5,286.0 261.3,285.3 262.9,285.6 263.4,276.5 264.2,277.1 264.8,286.0 268.0,286.2 270.9,284.9 272.8,285.3 274.1,286.8 1233.0,286.8 1233.8,272.3 1234.9,269.4 1236.3,265.0 1237.2,264.6 1238.2,270.4 1239.1,281.8 1239.9,286.8 1241.0,286.6 1242.2,279.9 1243.3,269.4 1244.5,266.6 1246.0,266.9 1247.0,272.3 1247.9,281.8 1248.9,286.0 1250.6,286.8"/>
<g shape-rendering="crispEdges">
<line x1="113.5" x2="113.5" y1="0" y2="320" stroke="#444" stroke-width="1"/>
<line x1="113" x2="1326" y1="319.5" y2="319.5" stroke="#444" stroke-width="1"/>
<rect x="224" y="318" width="429.8" height="2" fill="#9fcd8c"/>
</g>
<g fill="#fff" stroke="#333" stroke-width="1">
<rect x="225.5" y="39.5" width="5" height="25"/>
<rect x="1242.5" y="39.5" width="5" height="25"/>
<rect x="723.5" y="32.5" width="25" height="5"/>
<rect x="723.5" y="67.5" width="25" height="5"/>
</g>
<g font-family="'DejaVu Sans', 'Liberation Sans', sans-serif" font-size="12" fill="#444">
<text x="113" y="24.1" text-anchor="end">TensorMatrixE</text>
<text x="113" y="60.7" text-anchor="end">VectorE</text>
<text x="113" y="90.7" text-anchor="end">ScalarE</text>
<text x="113" y="112.5" text-anchor="end">GpSimdE</text>
<text x="113" y="157.7" text-anchor="end">State Buffer Usage</text>
<text x="113" y="201.4" text-anchor="end">PSUM Usage</text>
<text x="113" y="223.7" text-anchor="end">Sem 0</text>
<text x="113" y="257.7" text-anchor="end">Pending DMA Count</text>
<text x="113" y="290.8" text-anchor="end">DMA Throughput</text>
<text x="113" y="323.4" text-anchor="end">Estimated MFU</text>
<text x="113.7" y="333.6" text-anchor="middle">0</text>
<text x="450.5" y="333.6" text-anchor="middle">50,000</text>
<text x="787.4" y="333.6" text-anchor="middle">100,000</text>
<text x="1124.5" y="333.6" text-anchor="middle">150,000</text>
<text x="943.3" y="352" text-anchor="middle" font-size="14">246.2 us</text>
</g>
</svg>
<button class="b" style="left:-16.1px;width:78.8px">Search</button>
<button class="b" style="left:67.1px;width:112.7px">Annotations</button>
<button class="b" style="left:182.1px;width:152.7px">Edit view settings</button>
<button class="b" style="left:337.2px;width:94.5px">Summary</button>
<button class="b" style="left:436.1px;width:137.7px">Layer Summary</button>
<button class="b" style="left:578.2px;width:166.5px">Selection Summary</button>
<button class="b" style="left:748.9px;width:122px">NEFF Header</button>
<button class="b" style="left:875.2px;width:114.5px">NEFF Nodes</button>
<button class="b" style="left:994.1px;width:102.5px">Model Info</button>
<button class="b" style="left:1101px;width:153px">DMA Queues Info</button>
<button class="b" style="left:1258px;width:112px">NC Memory</button>
<div class="pop">
<div class="ph">Selection Summary</div>
<div class="pb">
<div>Duration: 150.93 <b>us</b></div>
<div>Start Time: 16.92 <b>us</b></div>
<div>End Time: 167.84 <b>us</b></div>
<div>Event Count: 181</div>
<div>Event Duration Sum: 193.94 <b>us</b></div>
<div>Event Duration Active: 148.99 <b>us</b> (98.71 <b>%</b>)</div>
</div>
<div class="sel"><span>VectorE (count = 181, active dur = 98.71%)</span><svg width="16" height="16" viewBox="0 0 16 16" style="vertical-align:-2px;margin-left:4px"><path d="M1.5 5.2 L8 11.2 L14.5 5.2" fill="none" stroke="#212529" stroke-width="1.3" stroke-linecap="round" stroke-linejoin="round"/></svg></div>
</div>
<svg class="arrow" width="18" height="9" viewBox="0 0 18 9"><path d="M0.5 9 L9 0.7 L17.5 9" fill="#f3f4f6" stroke="rgba(0,0,0,.2)" stroke-width="1"/></svg>
</body>
</html>
